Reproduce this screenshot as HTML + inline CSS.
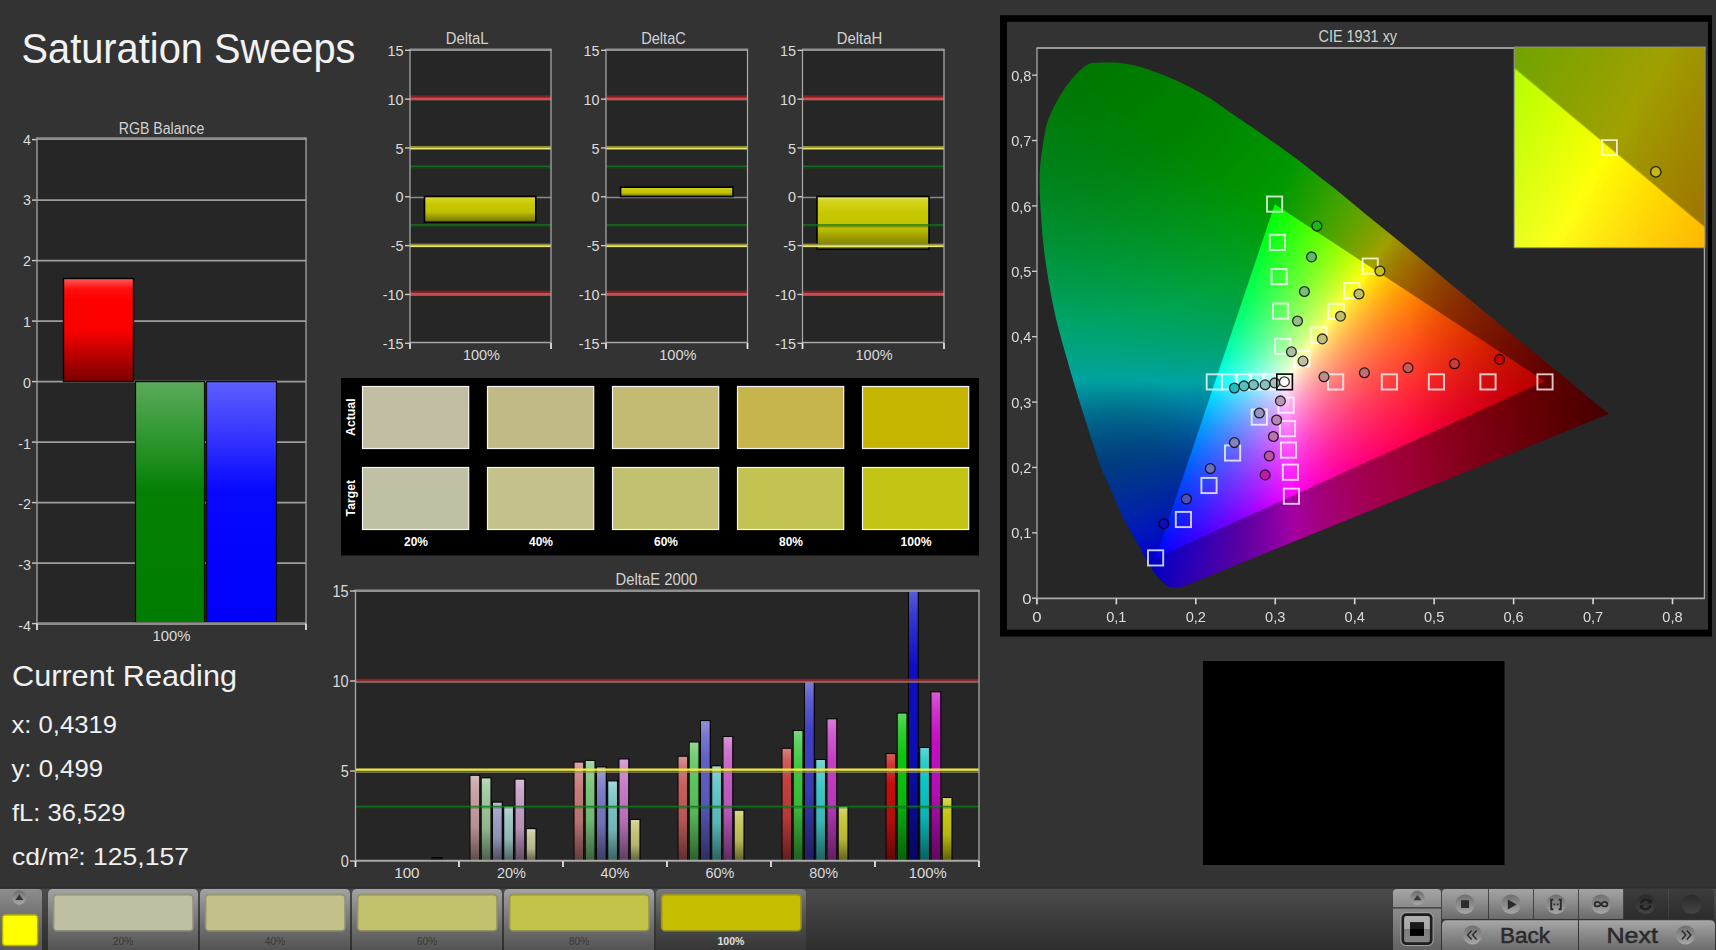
<!DOCTYPE html>
<html><head><meta charset="utf-8"><title>Saturation Sweeps</title>
<style>html,body{margin:0;padding:0;background:#333;overflow:hidden}svg{display:block}text{font-family:"Liberation Sans",sans-serif}</style>
</head><body>
<svg width="1716" height="950" viewBox="0 0 1716 950">
<defs>
<linearGradient id="g1" x1="0" y1="0" x2="0" y2="1"><stop offset="0" stop-color="#ff5a5a"/><stop offset="0.1" stop-color="#ff1010"/><stop offset="0.2" stop-color="#ff0000"/><stop offset="0.5" stop-color="#fb0000"/><stop offset="1" stop-color="#7a0000"/></linearGradient>
<linearGradient id="g2" x1="0" y1="0" x2="0" y2="1"><stop offset="0" stop-color="#5aaa5a"/><stop offset="0.2" stop-color="#359a35"/><stop offset="0.45" stop-color="#058005"/><stop offset="1" stop-color="#007c00"/></linearGradient>
<linearGradient id="g3" x1="0" y1="0" x2="0" y2="1"><stop offset="0" stop-color="#5e5eff"/><stop offset="0.2" stop-color="#3a3aff"/><stop offset="0.45" stop-color="#0808ff"/><stop offset="1" stop-color="#0000fb"/></linearGradient>
<linearGradient id="g4" x1="0" y1="0" x2="0" y2="1"><stop offset="0" stop-color="#e6e680"/><stop offset="0.08" stop-color="#d4d420"/><stop offset="0.3" stop-color="#c8c800"/><stop offset="0.6" stop-color="#c0c000"/><stop offset="1" stop-color="#6e6e00"/></linearGradient>
<linearGradient id="g5" x1="0" y1="0" x2="0" y2="1"><stop offset="0" stop-color="#e6e680"/><stop offset="0.08" stop-color="#d4d420"/><stop offset="0.3" stop-color="#c8c800"/><stop offset="0.6" stop-color="#c0c000"/><stop offset="1" stop-color="#6e6e00"/></linearGradient>
<linearGradient id="g6" x1="0" y1="0" x2="0" y2="1"><stop offset="0" stop-color="#e6e680"/><stop offset="0.08" stop-color="#d4d420"/><stop offset="0.3" stop-color="#c8c800"/><stop offset="0.6" stop-color="#c0c000"/><stop offset="1" stop-color="#6e6e00"/></linearGradient>
<linearGradient id="g7" x1="0" y1="0" x2="0" y2="1"><stop offset="0" stop-color="#d8bcbc"/><stop offset="0.1" stop-color="#ceacac"/><stop offset="0.28" stop-color="#c59d9d"/><stop offset="0.6" stop-color="#b59090"/><stop offset="1" stop-color="#5f4b4b"/></linearGradient>
<linearGradient id="g8" x1="0" y1="0" x2="0" y2="1"><stop offset="0" stop-color="#bcd8bc"/><stop offset="0.1" stop-color="#acceac"/><stop offset="0.28" stop-color="#9dc59d"/><stop offset="0.6" stop-color="#90b590"/><stop offset="1" stop-color="#4b5f4b"/></linearGradient>
<linearGradient id="g9" x1="0" y1="0" x2="0" y2="1"><stop offset="0" stop-color="#bcbcd8"/><stop offset="0.1" stop-color="#acacce"/><stop offset="0.28" stop-color="#9d9dc5"/><stop offset="0.6" stop-color="#9090b5"/><stop offset="1" stop-color="#4b4b5f"/></linearGradient>
<linearGradient id="g10" x1="0" y1="0" x2="0" y2="1"><stop offset="0" stop-color="#bcd8d8"/><stop offset="0.1" stop-color="#accece"/><stop offset="0.28" stop-color="#9dc5c5"/><stop offset="0.6" stop-color="#90b5b5"/><stop offset="1" stop-color="#4b5f5f"/></linearGradient>
<linearGradient id="g11" x1="0" y1="0" x2="0" y2="1"><stop offset="0" stop-color="#d8bcd8"/><stop offset="0.1" stop-color="#ceacce"/><stop offset="0.28" stop-color="#c59dc5"/><stop offset="0.6" stop-color="#b590b5"/><stop offset="1" stop-color="#5f4b5f"/></linearGradient>
<linearGradient id="g12" x1="0" y1="0" x2="0" y2="1"><stop offset="0" stop-color="#d8d8bc"/><stop offset="0.1" stop-color="#ceceac"/><stop offset="0.28" stop-color="#c5c59d"/><stop offset="0.6" stop-color="#b5b590"/><stop offset="1" stop-color="#5f5f4b"/></linearGradient>
<linearGradient id="g13" x1="0" y1="0" x2="0" y2="1"><stop offset="0" stop-color="#d8a5a5"/><stop offset="0.1" stop-color="#ce8f8f"/><stop offset="0.28" stop-color="#c57a7a"/><stop offset="0.6" stop-color="#b57070"/><stop offset="1" stop-color="#5f3b3b"/></linearGradient>
<linearGradient id="g14" x1="0" y1="0" x2="0" y2="1"><stop offset="0" stop-color="#a5d8a5"/><stop offset="0.1" stop-color="#8fce8f"/><stop offset="0.28" stop-color="#7ac57a"/><stop offset="0.6" stop-color="#70b570"/><stop offset="1" stop-color="#3b5f3b"/></linearGradient>
<linearGradient id="g15" x1="0" y1="0" x2="0" y2="1"><stop offset="0" stop-color="#a5a5d8"/><stop offset="0.1" stop-color="#8f8fce"/><stop offset="0.28" stop-color="#7a7ac5"/><stop offset="0.6" stop-color="#7070b5"/><stop offset="1" stop-color="#3b3b5f"/></linearGradient>
<linearGradient id="g16" x1="0" y1="0" x2="0" y2="1"><stop offset="0" stop-color="#a5d8d8"/><stop offset="0.1" stop-color="#8fcece"/><stop offset="0.28" stop-color="#7ac5c5"/><stop offset="0.6" stop-color="#70b5b5"/><stop offset="1" stop-color="#3b5f5f"/></linearGradient>
<linearGradient id="g17" x1="0" y1="0" x2="0" y2="1"><stop offset="0" stop-color="#d8a5d8"/><stop offset="0.1" stop-color="#ce8fce"/><stop offset="0.28" stop-color="#c57ac5"/><stop offset="0.6" stop-color="#b570b5"/><stop offset="1" stop-color="#5f3b5f"/></linearGradient>
<linearGradient id="g18" x1="0" y1="0" x2="0" y2="1"><stop offset="0" stop-color="#d8d8a5"/><stop offset="0.1" stop-color="#cece8f"/><stop offset="0.28" stop-color="#c5c57a"/><stop offset="0.6" stop-color="#b5b570"/><stop offset="1" stop-color="#5f5f3b"/></linearGradient>
<linearGradient id="g19" x1="0" y1="0" x2="0" y2="1"><stop offset="0" stop-color="#d89292"/><stop offset="0.1" stop-color="#ce7878"/><stop offset="0.28" stop-color="#c55f5f"/><stop offset="0.6" stop-color="#b55757"/><stop offset="1" stop-color="#5f2d2d"/></linearGradient>
<linearGradient id="g20" x1="0" y1="0" x2="0" y2="1"><stop offset="0" stop-color="#92d892"/><stop offset="0.1" stop-color="#78ce78"/><stop offset="0.28" stop-color="#5fc55f"/><stop offset="0.6" stop-color="#57b557"/><stop offset="1" stop-color="#2d5f2d"/></linearGradient>
<linearGradient id="g21" x1="0" y1="0" x2="0" y2="1"><stop offset="0" stop-color="#9292d8"/><stop offset="0.1" stop-color="#7878ce"/><stop offset="0.28" stop-color="#5f5fc5"/><stop offset="0.6" stop-color="#5757b5"/><stop offset="1" stop-color="#2d2d5f"/></linearGradient>
<linearGradient id="g22" x1="0" y1="0" x2="0" y2="1"><stop offset="0" stop-color="#92d8d8"/><stop offset="0.1" stop-color="#78cece"/><stop offset="0.28" stop-color="#5fc5c5"/><stop offset="0.6" stop-color="#57b5b5"/><stop offset="1" stop-color="#2d5f5f"/></linearGradient>
<linearGradient id="g23" x1="0" y1="0" x2="0" y2="1"><stop offset="0" stop-color="#d892d8"/><stop offset="0.1" stop-color="#ce78ce"/><stop offset="0.28" stop-color="#c55fc5"/><stop offset="0.6" stop-color="#b557b5"/><stop offset="1" stop-color="#5f2d5f"/></linearGradient>
<linearGradient id="g24" x1="0" y1="0" x2="0" y2="1"><stop offset="0" stop-color="#d8d892"/><stop offset="0.1" stop-color="#cece78"/><stop offset="0.28" stop-color="#c5c55f"/><stop offset="0.6" stop-color="#b5b557"/><stop offset="1" stop-color="#5f5f2d"/></linearGradient>
<linearGradient id="g25" x1="0" y1="0" x2="0" y2="1"><stop offset="0" stop-color="#d87d7d"/><stop offset="0.1" stop-color="#ce5e5e"/><stop offset="0.28" stop-color="#c53f3f"/><stop offset="0.6" stop-color="#b53a3a"/><stop offset="1" stop-color="#5f1e1e"/></linearGradient>
<linearGradient id="g26" x1="0" y1="0" x2="0" y2="1"><stop offset="0" stop-color="#7dd87d"/><stop offset="0.1" stop-color="#5ece5e"/><stop offset="0.28" stop-color="#3fc53f"/><stop offset="0.6" stop-color="#3ab53a"/><stop offset="1" stop-color="#1e5f1e"/></linearGradient>
<linearGradient id="g27" x1="0" y1="0" x2="0" y2="1"><stop offset="0" stop-color="#7d7dd8"/><stop offset="0.1" stop-color="#5e5ece"/><stop offset="0.28" stop-color="#3f3fc5"/><stop offset="0.6" stop-color="#3a3ab5"/><stop offset="1" stop-color="#1e1e5f"/></linearGradient>
<linearGradient id="g28" x1="0" y1="0" x2="0" y2="1"><stop offset="0" stop-color="#7dd8d8"/><stop offset="0.1" stop-color="#5ecece"/><stop offset="0.28" stop-color="#3fc5c5"/><stop offset="0.6" stop-color="#3ab5b5"/><stop offset="1" stop-color="#1e5f5f"/></linearGradient>
<linearGradient id="g29" x1="0" y1="0" x2="0" y2="1"><stop offset="0" stop-color="#d87dd8"/><stop offset="0.1" stop-color="#ce5ece"/><stop offset="0.28" stop-color="#c53fc5"/><stop offset="0.6" stop-color="#b53ab5"/><stop offset="1" stop-color="#5f1e5f"/></linearGradient>
<linearGradient id="g30" x1="0" y1="0" x2="0" y2="1"><stop offset="0" stop-color="#d8d87d"/><stop offset="0.1" stop-color="#cece5e"/><stop offset="0.28" stop-color="#c5c53f"/><stop offset="0.6" stop-color="#b5b53a"/><stop offset="1" stop-color="#5f5f1e"/></linearGradient>
<linearGradient id="g31" x1="0" y1="0" x2="0" y2="1"><stop offset="0" stop-color="#d85b5b"/><stop offset="0.1" stop-color="#ce3535"/><stop offset="0.28" stop-color="#c50e0e"/><stop offset="0.6" stop-color="#b50d0d"/><stop offset="1" stop-color="#5f0707"/></linearGradient>
<linearGradient id="g32" x1="0" y1="0" x2="0" y2="1"><stop offset="0" stop-color="#5bd85b"/><stop offset="0.1" stop-color="#35ce35"/><stop offset="0.28" stop-color="#0ec50e"/><stop offset="0.6" stop-color="#0db50d"/><stop offset="1" stop-color="#075f07"/></linearGradient>
<linearGradient id="g33" x1="0" y1="0" x2="0" y2="1"><stop offset="0" stop-color="#5b5bd8"/><stop offset="0.1" stop-color="#3535ce"/><stop offset="0.28" stop-color="#0e0ec5"/><stop offset="0.6" stop-color="#0d0db5"/><stop offset="1" stop-color="#07075f"/></linearGradient>
<linearGradient id="g34" x1="0" y1="0" x2="0" y2="1"><stop offset="0" stop-color="#5bd8d8"/><stop offset="0.1" stop-color="#35cece"/><stop offset="0.28" stop-color="#0ec5c5"/><stop offset="0.6" stop-color="#0db5b5"/><stop offset="1" stop-color="#075f5f"/></linearGradient>
<linearGradient id="g35" x1="0" y1="0" x2="0" y2="1"><stop offset="0" stop-color="#d85bd8"/><stop offset="0.1" stop-color="#ce35ce"/><stop offset="0.28" stop-color="#c50ec5"/><stop offset="0.6" stop-color="#b50db5"/><stop offset="1" stop-color="#5f075f"/></linearGradient>
<linearGradient id="g36" x1="0" y1="0" x2="0" y2="1"><stop offset="0" stop-color="#d8d85b"/><stop offset="0.1" stop-color="#cece35"/><stop offset="0.28" stop-color="#c5c50e"/><stop offset="0.6" stop-color="#b5b50d"/><stop offset="1" stop-color="#5f5f07"/></linearGradient>
<radialGradient id="ov1" gradientUnits="userSpaceOnUse" cx="0" cy="0" r="1" gradientTransform="translate(1135.85 538.36) scale(103.22 85.14)"><stop offset="0" stop-color="#000" stop-opacity="0"/><stop offset="0.3" stop-color="#000" stop-opacity="0.03"/><stop offset="1" stop-color="#000" stop-opacity="0.2"/></radialGradient>
<radialGradient id="ov2" gradientUnits="userSpaceOnUse" cx="0" cy="0" r="1" gradientTransform="translate(1052.48 34.09) scale(349.36 288.16)"><stop offset="0" stop-color="#000" stop-opacity="0.3"/><stop offset="0.5" stop-color="#000" stop-opacity="0.2"/><stop offset="1" stop-color="#000" stop-opacity="0"/></radialGradient>
<radialGradient id="ov5" gradientUnits="userSpaceOnUse" cx="0" cy="0" r="1" gradientTransform="translate(1112.03 466.32) scale(111.16 91.69)"><stop offset="0" stop-color="#000" stop-opacity="0.24"/><stop offset="0.5" stop-color="#000" stop-opacity="0.16"/><stop offset="1" stop-color="#000" stop-opacity="0"/></radialGradient>
<linearGradient id="ov3" gradientUnits="userSpaceOnUse" x1="1409.78" y1="400.83" x2="1616.22" y2="400.83"><stop offset="0" stop-color="#000" stop-opacity="0"/><stop offset="0.65" stop-color="#000" stop-opacity="0.3"/><stop offset="1" stop-color="#000" stop-opacity="0.45"/></linearGradient>
<linearGradient id="ov4" gradientUnits="userSpaceOnUse" x1="1354.2" y1="400.83" x2="1608.28" y2="400.83"><stop offset="0" stop-color="#000" stop-opacity="0"/><stop offset="0.6" stop-color="#000" stop-opacity="0.11"/><stop offset="1" stop-color="#000" stop-opacity="0.24"/></linearGradient>
<clipPath id="hs"><path d="M1094.1 62.8C1097.3 62.42 1102.63 62.4 1106.9 62.4C1111.17 62.4 1115.42 62.35 1119.7 62.8C1123.98 63.25 1128.32 64.13 1132.6 65.1C1136.88 66.07 1141.13 67.27 1145.4 68.6C1149.67 69.93 1153.93 71.5 1158.2 73.1C1162.47 74.7 1166.73 76.38 1171 78.2C1175.27 80.02 1179.52 81.9 1183.8 84C1188.08 86.1 1192.42 88.45 1196.7 90.8C1200.98 93.15 1205.62 95.7 1209.5 98.1C1213.38 100.5 1215.25 101.92 1220 105.2C1224.75 108.48 1231.68 113.45 1238 117.8C1244.32 122.15 1251.43 126.83 1257.9 131.3C1264.37 135.77 1270.48 140.1 1276.8 144.6C1283.12 149.1 1289.27 153.4 1295.8 158.3C1302.33 163.2 1309.22 168.72 1316 174C1322.78 179.28 1329.02 183.97 1336.5 190C1343.98 196.03 1352.15 203 1360.89 210.17C1369.64 217.34 1379.69 225.45 1388.95 233.03C1398.21 240.6 1407.41 248.19 1416.45 255.62C1425.48 263.05 1434.44 270.44 1443.16 277.63C1451.87 284.81 1460.47 291.9 1468.75 298.71C1477.04 305.52 1485.17 312.17 1492.85 318.49C1500.52 324.81 1507.96 330.99 1514.8 336.63C1521.64 342.28 1527.91 347.43 1533.9 352.35C1539.88 357.27 1545.57 361.97 1550.7 366.17C1555.82 370.37 1558.93 372.86 1564.65 377.56C1570.37 382.27 1579.45 389.81 1585.01 394.39C1590.57 398.98 1594.38 402.08 1598.01 405.07C1601.64 408.06 1605.04 410.85 1606.81 412.34C1608.57 413.83 1608.3 413.72 1608.6 414C1539.8 441.92 1264.6 553.58 1195.8 581.5C1193.83 582.27 1186.82 585.12 1184 586.1C1181.18 587.08 1180.87 587.18 1178.9 587.4C1176.93 587.62 1174.15 587.68 1172.2 587.4C1170.25 587.12 1168.88 586.68 1167.2 585.7C1165.52 584.72 1164.07 583.47 1162.1 581.5C1160.13 579.53 1157.78 577.13 1155.4 573.9C1153.02 570.67 1150.9 567.43 1147.8 562.1C1144.7 556.77 1140.73 548.92 1136.8 541.9C1132.87 534.88 1128.78 529.33 1124.2 520C1119.62 510.67 1113.33 495.07 1109.3 485.9C1105.27 476.73 1103.97 475.88 1100 465C1096.03 454.12 1089.75 433.93 1085.5 420.6C1081.25 407.27 1077.77 395.88 1074.5 385C1071.23 374.12 1068.85 365.8 1065.9 355.3C1062.95 344.8 1059.42 332.88 1056.8 322C1054.18 311.12 1052.33 302 1050.2 290C1048.07 278 1045.53 262.5 1044 250C1042.47 237.5 1041.72 225.33 1041 215C1040.28 204.67 1039.82 196.33 1039.7 188C1039.58 179.67 1039.35 174.67 1040.3 165C1041.25 155.33 1043.7 138.48 1045.4 130C1047.1 121.52 1048.58 118.88 1050.5 114.1C1052.42 109.32 1054.55 105.57 1056.9 101.3C1059.25 97.03 1061.82 92.57 1064.6 88.5C1067.38 84.43 1070.82 80.12 1073.6 76.9C1076.38 73.68 1078.95 71.23 1081.3 69.2C1083.65 67.17 1085.57 65.77 1087.7 64.7C1089.83 63.63 1090.9 63.18 1094.1 62.8Z"/></clipPath>
<clipPath id="sr"><path d="M1282.19 381.27L2502.48 -1306.03L7438.97 1670.2L1379.16 2344.35Z"/></clipPath>
<clipPath id="sg"><path d="M1286.25 383.83L2531.44 -1291.05L-1842.01 -4175.95L-1095.65 401.84Z"/></clipPath>
<clipPath id="sb"><path d="M1286.8 380.18L-1095.19 374.18L-3091.33 4176.09L1412.84 2342.12Z"/></clipPath>
<g id="ciefill" style="isolation:isolate"><rect x="-3000" y="-3000" width="9000" height="9000" fill="#000"/><g style="mix-blend-mode:screen"><path d="M1282.19 381.27L2502.48 -1306.03L7438.97 1670.2L1379.16 2344.35Z" fill="#ff0000"/><g clip-path="url(#sg)"><path d="M1155.7 558.01L1648.81 -114.44L1409.88 -199.39Z" fill="#fe0000"/><path d="M1155.7 558.01L1647.32 -115.18L1409.88 -199.39Z" fill="#fb0000"/><path d="M1155.7 558.01L1645.83 -115.92L1409.88 -199.39Z" fill="#f90000"/><path d="M1155.7 558.01L1644.35 -116.65L1409.88 -199.39Z" fill="#f70000"/><path d="M1155.7 558.01L1642.86 -117.39L1409.88 -199.39Z" fill="#f50000"/><path d="M1155.7 558.01L1641.37 -118.12L1409.88 -199.39Z" fill="#f20000"/><path d="M1155.7 558.01L1639.87 -118.84L1409.88 -199.39Z" fill="#f00000"/><path d="M1155.7 558.01L1638.38 -119.57L1409.88 -199.39Z" fill="#ee0000"/><path d="M1155.7 558.01L1636.88 -120.29L1409.88 -199.39Z" fill="#ec0000"/><path d="M1155.7 558.01L1635.38 -121.01L1409.88 -199.39Z" fill="#e90000"/><path d="M1155.7 558.01L1633.89 -121.73L1409.88 -199.39Z" fill="#e70000"/><path d="M1155.7 558.01L1632.38 -122.45L1409.88 -199.39Z" fill="#e50000"/><path d="M1155.7 558.01L1630.88 -123.16L1409.88 -199.39Z" fill="#e30000"/><path d="M1155.7 558.01L1629.38 -123.88L1409.88 -199.39Z" fill="#e10000"/><path d="M1155.7 558.01L1627.87 -124.59L1409.88 -199.39Z" fill="#de0000"/><path d="M1155.7 558.01L1626.37 -125.29L1409.88 -199.39Z" fill="#dc0000"/><path d="M1155.7 558.01L1624.86 -126L1409.88 -199.39Z" fill="#da0000"/><path d="M1155.7 558.01L1623.35 -126.7L1409.88 -199.39Z" fill="#d80000"/><path d="M1155.7 558.01L1621.84 -127.4L1409.88 -199.39Z" fill="#d60000"/><path d="M1155.7 558.01L1620.32 -128.1L1409.88 -199.39Z" fill="#d40000"/><path d="M1155.7 558.01L1618.81 -128.8L1409.88 -199.39Z" fill="#d20000"/><path d="M1155.7 558.01L1617.29 -129.49L1409.88 -199.39Z" fill="#d00000"/><path d="M1155.7 558.01L1615.77 -130.19L1409.88 -199.39Z" fill="#ce0000"/><path d="M1155.7 558.01L1614.25 -130.87L1409.88 -199.39Z" fill="#cb0000"/><path d="M1155.7 558.01L1612.73 -131.56L1409.88 -199.39Z" fill="#c90000"/><path d="M1155.7 558.01L1611.21 -132.25L1409.88 -199.39Z" fill="#c70000"/><path d="M1155.7 558.01L1609.69 -132.93L1409.88 -199.39Z" fill="#c50000"/><path d="M1155.7 558.01L1608.16 -133.61L1409.88 -199.39Z" fill="#c30000"/><path d="M1155.7 558.01L1606.63 -134.29L1409.88 -199.39Z" fill="#c10000"/><path d="M1155.7 558.01L1605.11 -134.96L1409.88 -199.39Z" fill="#bf0000"/><path d="M1155.7 558.01L1603.58 -135.64L1409.88 -199.39Z" fill="#bd0000"/><path d="M1155.7 558.01L1602.04 -136.31L1409.88 -199.39Z" fill="#bb0000"/><path d="M1155.7 558.01L1600.51 -136.98L1409.88 -199.39Z" fill="#b90000"/><path d="M1155.7 558.01L1598.98 -137.64L1409.88 -199.39Z" fill="#b70000"/><path d="M1155.7 558.01L1597.44 -138.31L1409.88 -199.39Z" fill="#b50000"/><path d="M1155.7 558.01L1595.9 -138.97L1409.88 -199.39Z" fill="#b40000"/><path d="M1155.7 558.01L1594.37 -139.63L1409.88 -199.39Z" fill="#b20000"/><path d="M1155.7 558.01L1592.82 -140.29L1409.88 -199.39Z" fill="#b00000"/><path d="M1155.7 558.01L1591.28 -140.94L1409.88 -199.39Z" fill="#ae0000"/><path d="M1155.7 558.01L1589.74 -141.6L1409.88 -199.39Z" fill="#ac0000"/><path d="M1155.7 558.01L1588.2 -142.25L1409.88 -199.39Z" fill="#aa0000"/><path d="M1155.7 558.01L1586.65 -142.89L1409.88 -199.39Z" fill="#a80000"/><path d="M1155.7 558.01L1585.1 -143.54L1409.88 -199.39Z" fill="#a60000"/><path d="M1155.7 558.01L1583.55 -144.18L1409.88 -199.39Z" fill="#a40000"/><path d="M1155.7 558.01L1582 -144.82L1409.88 -199.39Z" fill="#a30000"/><path d="M1155.7 558.01L1580.45 -145.46L1409.88 -199.39Z" fill="#a10000"/><path d="M1155.7 558.01L1578.9 -146.1L1409.88 -199.39Z" fill="#9f0000"/><path d="M1155.7 558.01L1577.34 -146.73L1409.88 -199.39Z" fill="#9d0000"/><path d="M1155.7 558.01L1575.79 -147.37L1409.88 -199.39Z" fill="#9b0000"/><path d="M1155.7 558.01L1574.23 -148L1409.88 -199.39Z" fill="#990000"/><path d="M1155.7 558.01L1572.67 -148.62L1409.88 -199.39Z" fill="#980000"/><path d="M1155.7 558.01L1571.11 -149.25L1409.88 -199.39Z" fill="#960000"/><path d="M1155.7 558.01L1569.55 -149.87L1409.88 -199.39Z" fill="#940000"/><path d="M1155.7 558.01L1567.99 -150.49L1409.88 -199.39Z" fill="#920000"/><path d="M1155.7 558.01L1566.42 -151.11L1409.88 -199.39Z" fill="#900000"/><path d="M1155.7 558.01L1564.86 -151.72L1409.88 -199.39Z" fill="#8f0000"/><path d="M1155.7 558.01L1563.29 -152.34L1409.88 -199.39Z" fill="#8d0000"/><path d="M1155.7 558.01L1561.72 -152.95L1409.88 -199.39Z" fill="#8b0000"/><path d="M1155.7 558.01L1560.15 -153.56L1409.88 -199.39Z" fill="#890000"/><path d="M1155.7 558.01L1558.58 -154.16L1409.88 -199.39Z" fill="#880000"/><path d="M1155.7 558.01L1557.01 -154.77L1409.88 -199.39Z" fill="#860000"/><path d="M1155.7 558.01L1555.44 -155.37L1409.88 -199.39Z" fill="#840000"/><path d="M1155.7 558.01L1553.86 -155.97L1409.88 -199.39Z" fill="#820000"/><path d="M1155.7 558.01L1552.29 -156.56L1409.88 -199.39Z" fill="#810000"/><path d="M1155.7 558.01L1550.71 -157.16L1409.88 -199.39Z" fill="#7f0000"/><path d="M1155.7 558.01L1549.13 -157.75L1409.88 -199.39Z" fill="#7d0000"/><path d="M1155.7 558.01L1547.55 -158.34L1409.88 -199.39Z" fill="#7c0000"/><path d="M1155.7 558.01L1545.97 -158.92L1409.88 -199.39Z" fill="#7a0000"/><path d="M1155.7 558.01L1544.39 -159.51L1409.88 -199.39Z" fill="#780000"/><path d="M1155.7 558.01L1542.8 -160.09L1409.88 -199.39Z" fill="#770000"/><path d="M1155.7 558.01L1541.22 -160.67L1409.88 -199.39Z" fill="#750000"/><path d="M1155.7 558.01L1539.63 -161.25L1409.88 -199.39Z" fill="#730000"/><path d="M1155.7 558.01L1538.04 -161.82L1409.88 -199.39Z" fill="#720000"/><path d="M1155.7 558.01L1536.45 -162.4L1409.88 -199.39Z" fill="#700000"/><path d="M1155.7 558.01L1534.86 -162.97L1409.88 -199.39Z" fill="#6e0000"/><path d="M1155.7 558.01L1533.27 -163.54L1409.88 -199.39Z" fill="#6d0000"/><path d="M1155.7 558.01L1531.68 -164.1L1409.88 -199.39Z" fill="#6b0000"/><path d="M1155.7 558.01L1530.08 -164.66L1409.88 -199.39Z" fill="#6a0000"/><path d="M1155.7 558.01L1528.49 -165.23L1409.88 -199.39Z" fill="#680000"/><path d="M1155.7 558.01L1526.89 -165.78L1409.88 -199.39Z" fill="#660000"/><path d="M1155.7 558.01L1525.29 -166.34L1409.88 -199.39Z" fill="#650000"/><path d="M1155.7 558.01L1523.7 -166.89L1409.88 -199.39Z" fill="#630000"/><path d="M1155.7 558.01L1522.09 -167.44L1409.88 -199.39Z" fill="#620000"/><path d="M1155.7 558.01L1520.49 -167.99L1409.88 -199.39Z" fill="#600000"/><path d="M1155.7 558.01L1518.89 -168.54L1409.88 -199.39Z" fill="#5e0000"/><path d="M1155.7 558.01L1517.29 -169.08L1409.88 -199.39Z" fill="#5d0000"/><path d="M1155.7 558.01L1515.68 -169.63L1409.88 -199.39Z" fill="#5b0000"/><path d="M1155.7 558.01L1514.08 -170.16L1409.88 -199.39Z" fill="#5a0000"/><path d="M1155.7 558.01L1512.47 -170.7L1409.88 -199.39Z" fill="#580000"/><path d="M1155.7 558.01L1510.86 -171.24L1409.88 -199.39Z" fill="#570000"/><path d="M1155.7 558.01L1509.25 -171.77L1409.88 -199.39Z" fill="#550000"/><path d="M1155.7 558.01L1507.64 -172.3L1409.88 -199.39Z" fill="#540000"/><path d="M1155.7 558.01L1506.03 -172.82L1409.88 -199.39Z" fill="#520000"/><path d="M1155.7 558.01L1504.41 -173.35L1409.88 -199.39Z" fill="#510000"/><path d="M1155.7 558.01L1502.8 -173.87L1409.88 -199.39Z" fill="#4f0000"/><path d="M1155.7 558.01L1501.18 -174.39L1409.88 -199.39Z" fill="#4e0000"/><path d="M1155.7 558.01L1499.57 -174.91L1409.88 -199.39Z" fill="#4c0000"/><path d="M1155.7 558.01L1497.95 -175.42L1409.88 -199.39Z" fill="#4b0000"/><path d="M1155.7 558.01L1496.33 -175.94L1409.88 -199.39Z" fill="#490000"/><path d="M1155.7 558.01L1494.71 -176.45L1409.88 -199.39Z" fill="#480000"/><path d="M1155.7 558.01L1493.09 -176.95L1409.88 -199.39Z" fill="#460000"/><path d="M1155.7 558.01L1491.47 -177.46L1409.88 -199.39Z" fill="#450000"/><path d="M1155.7 558.01L1489.84 -177.96L1409.88 -199.39Z" fill="#430000"/><path d="M1155.7 558.01L1488.22 -178.46L1409.88 -199.39Z" fill="#420000"/><path d="M1155.7 558.01L1486.59 -178.96L1409.88 -199.39Z" fill="#400000"/><path d="M1155.7 558.01L1484.96 -179.46L1409.88 -199.39Z" fill="#3f0000"/><path d="M1155.7 558.01L1483.34 -179.95L1409.88 -199.39Z" fill="#3d0000"/><path d="M1155.7 558.01L1481.71 -180.44L1409.88 -199.39Z" fill="#3c0000"/><path d="M1155.7 558.01L1480.08 -180.93L1409.88 -199.39Z" fill="#3a0000"/><path d="M1155.7 558.01L1478.45 -181.41L1409.88 -199.39Z" fill="#390000"/><path d="M1155.7 558.01L1476.81 -181.9L1409.88 -199.39Z" fill="#370000"/><path d="M1155.7 558.01L1475.18 -182.38L1409.88 -199.39Z" fill="#360000"/><path d="M1155.7 558.01L1473.55 -182.86L1409.88 -199.39Z" fill="#350000"/><path d="M1155.7 558.01L1471.91 -183.33L1409.88 -199.39Z" fill="#330000"/><path d="M1155.7 558.01L1470.27 -183.81L1409.88 -199.39Z" fill="#320000"/><path d="M1155.7 558.01L1468.64 -184.28L1409.88 -199.39Z" fill="#300000"/><path d="M1155.7 558.01L1467 -184.75L1409.88 -199.39Z" fill="#2f0000"/><path d="M1155.7 558.01L1465.36 -185.21L1409.88 -199.39Z" fill="#2d0000"/><path d="M1155.7 558.01L1463.72 -185.68L1409.88 -199.39Z" fill="#2c0000"/><path d="M1155.7 558.01L1462.08 -186.14L1409.88 -199.39Z" fill="#2b0000"/><path d="M1155.7 558.01L1460.43 -186.6L1409.88 -199.39Z" fill="#290000"/><path d="M1155.7 558.01L1458.79 -187.05L1409.88 -199.39Z" fill="#280000"/><path d="M1155.7 558.01L1457.15 -187.51L1409.88 -199.39Z" fill="#260000"/><path d="M1155.7 558.01L1455.5 -187.96L1409.88 -199.39Z" fill="#250000"/><path d="M1155.7 558.01L1453.85 -188.41L1409.88 -199.39Z" fill="#240000"/><path d="M1155.7 558.01L1452.21 -188.85L1409.88 -199.39Z" fill="#220000"/><path d="M1155.7 558.01L1450.56 -189.3L1409.88 -199.39Z" fill="#210000"/><path d="M1155.7 558.01L1448.91 -189.74L1409.88 -199.39Z" fill="#1f0000"/><path d="M1155.7 558.01L1447.26 -190.18L1409.88 -199.39Z" fill="#1e0000"/><path d="M1155.7 558.01L1445.61 -190.61L1409.88 -199.39Z" fill="#1d0000"/><path d="M1155.7 558.01L1443.95 -191.05L1409.88 -199.39Z" fill="#1b0000"/><path d="M1155.7 558.01L1442.3 -191.48L1409.88 -199.39Z" fill="#1a0000"/><path d="M1155.7 558.01L1440.65 -191.91L1409.88 -199.39Z" fill="#190000"/><path d="M1155.7 558.01L1438.99 -192.33L1409.88 -199.39Z" fill="#170000"/><path d="M1155.7 558.01L1437.33 -192.76L1409.88 -199.39Z" fill="#160000"/><path d="M1155.7 558.01L1435.68 -193.18L1409.88 -199.39Z" fill="#140000"/><path d="M1155.7 558.01L1434.02 -193.6L1409.88 -199.39Z" fill="#130000"/><path d="M1155.7 558.01L1432.36 -194.02L1409.88 -199.39Z" fill="#120000"/><path d="M1155.7 558.01L1430.7 -194.43L1409.88 -199.39Z" fill="#100000"/><path d="M1155.7 558.01L1429.04 -194.84L1409.88 -199.39Z" fill="#0f0000"/><path d="M1155.7 558.01L1427.38 -195.25L1409.88 -199.39Z" fill="#0e0000"/><path d="M1155.7 558.01L1425.71 -195.66L1409.88 -199.39Z" fill="#0c0000"/><path d="M1155.7 558.01L1424.05 -196.06L1409.88 -199.39Z" fill="#0b0000"/><path d="M1155.7 558.01L1422.39 -196.46L1409.88 -199.39Z" fill="#090000"/><path d="M1155.7 558.01L1420.72 -196.86L1409.88 -199.39Z" fill="#080000"/><path d="M1155.7 558.01L1419.06 -197.26L1409.88 -199.39Z" fill="#070000"/><path d="M1155.7 558.01L1417.39 -197.65L1409.88 -199.39Z" fill="#050000"/><path d="M1155.7 558.01L1415.72 -198.04L1409.88 -199.39Z" fill="#040000"/><path d="M1155.7 558.01L1414.05 -198.43L1409.88 -199.39Z" fill="#020000"/><path d="M1155.7 558.01L1412.38 -198.82L1409.88 -199.39Z" fill="#010000"/></g><g clip-path="url(#sb)"><path d="M1274.8 204.36L1319.4 989.38L1018.82 961.35Z" fill="#fe0000"/><path d="M1274.8 204.36L1317.39 989.45L1018.82 961.35Z" fill="#fc0000"/><path d="M1274.8 204.36L1315.37 989.53L1018.82 961.35Z" fill="#fa0000"/><path d="M1274.8 204.36L1313.35 989.6L1018.82 961.35Z" fill="#f80000"/><path d="M1274.8 204.36L1311.34 989.66L1018.82 961.35Z" fill="#f60000"/><path d="M1274.8 204.36L1309.32 989.72L1018.82 961.35Z" fill="#f40000"/><path d="M1274.8 204.36L1307.3 989.78L1018.82 961.35Z" fill="#f20000"/><path d="M1274.8 204.36L1305.28 989.84L1018.82 961.35Z" fill="#f00000"/><path d="M1274.8 204.36L1303.27 989.89L1018.82 961.35Z" fill="#ee0000"/><path d="M1274.8 204.36L1301.25 989.94L1018.82 961.35Z" fill="#ec0000"/><path d="M1274.8 204.36L1299.23 989.98L1018.82 961.35Z" fill="#ea0000"/><path d="M1274.8 204.36L1297.21 990.02L1018.82 961.35Z" fill="#e80000"/><path d="M1274.8 204.36L1295.2 990.06L1018.82 961.35Z" fill="#e60000"/><path d="M1274.8 204.36L1293.18 990.09L1018.82 961.35Z" fill="#e40000"/><path d="M1274.8 204.36L1291.16 990.12L1018.82 961.35Z" fill="#e20000"/><path d="M1274.8 204.36L1289.14 990.15L1018.82 961.35Z" fill="#e10000"/><path d="M1274.8 204.36L1287.12 990.17L1018.82 961.35Z" fill="#df0000"/><path d="M1274.8 204.36L1285.1 990.19L1018.82 961.35Z" fill="#dd0000"/><path d="M1274.8 204.36L1283.09 990.21L1018.82 961.35Z" fill="#db0000"/><path d="M1274.8 204.36L1281.07 990.22L1018.82 961.35Z" fill="#d90000"/><path d="M1274.8 204.36L1279.05 990.23L1018.82 961.35Z" fill="#d70000"/><path d="M1274.8 204.36L1277.03 990.24L1018.82 961.35Z" fill="#d50000"/><path d="M1274.8 204.36L1275.01 990.24L1018.82 961.35Z" fill="#d30000"/><path d="M1274.8 204.36L1272.99 990.24L1018.82 961.35Z" fill="#d10000"/><path d="M1274.8 204.36L1270.97 990.23L1018.82 961.35Z" fill="#d00000"/><path d="M1274.8 204.36L1268.96 990.23L1018.82 961.35Z" fill="#ce0000"/><path d="M1274.8 204.36L1266.94 990.21L1018.82 961.35Z" fill="#cc0000"/><path d="M1274.8 204.36L1264.92 990.2L1018.82 961.35Z" fill="#ca0000"/><path d="M1274.8 204.36L1262.9 990.18L1018.82 961.35Z" fill="#c80000"/><path d="M1274.8 204.36L1260.88 990.16L1018.82 961.35Z" fill="#c60000"/><path d="M1274.8 204.36L1258.86 990.13L1018.82 961.35Z" fill="#c50000"/><path d="M1274.8 204.36L1256.85 990.1L1018.82 961.35Z" fill="#c30000"/><path d="M1274.8 204.36L1254.83 990.07L1018.82 961.35Z" fill="#c10000"/><path d="M1274.8 204.36L1252.81 990.03L1018.82 961.35Z" fill="#bf0000"/><path d="M1274.8 204.36L1250.79 989.99L1018.82 961.35Z" fill="#bd0000"/><path d="M1274.8 204.36L1248.77 989.95L1018.82 961.35Z" fill="#bb0000"/><path d="M1274.8 204.36L1246.76 989.9L1018.82 961.35Z" fill="#ba0000"/><path d="M1274.8 204.36L1244.74 989.85L1018.82 961.35Z" fill="#b80000"/><path d="M1274.8 204.36L1242.72 989.79L1018.82 961.35Z" fill="#b60000"/><path d="M1274.8 204.36L1240.7 989.74L1018.82 961.35Z" fill="#b40000"/><path d="M1274.8 204.36L1238.69 989.68L1018.82 961.35Z" fill="#b20000"/><path d="M1274.8 204.36L1236.67 989.61L1018.82 961.35Z" fill="#b10000"/><path d="M1274.8 204.36L1234.65 989.54L1018.82 961.35Z" fill="#af0000"/><path d="M1274.8 204.36L1232.64 989.47L1018.82 961.35Z" fill="#ad0000"/><path d="M1274.8 204.36L1230.62 989.39L1018.82 961.35Z" fill="#ab0000"/><path d="M1274.8 204.36L1228.6 989.32L1018.82 961.35Z" fill="#aa0000"/><path d="M1274.8 204.36L1226.59 989.23L1018.82 961.35Z" fill="#a80000"/><path d="M1274.8 204.36L1224.57 989.15L1018.82 961.35Z" fill="#a60000"/><path d="M1274.8 204.36L1222.56 989.06L1018.82 961.35Z" fill="#a40000"/><path d="M1274.8 204.36L1220.54 988.96L1018.82 961.35Z" fill="#a30000"/><path d="M1274.8 204.36L1218.53 988.87L1018.82 961.35Z" fill="#a10000"/><path d="M1274.8 204.36L1216.51 988.77L1018.82 961.35Z" fill="#9f0000"/><path d="M1274.8 204.36L1214.5 988.66L1018.82 961.35Z" fill="#9d0000"/><path d="M1274.8 204.36L1212.48 988.56L1018.82 961.35Z" fill="#9c0000"/><path d="M1274.8 204.36L1210.47 988.45L1018.82 961.35Z" fill="#9a0000"/><path d="M1274.8 204.36L1208.45 988.33L1018.82 961.35Z" fill="#980000"/><path d="M1274.8 204.36L1206.44 988.21L1018.82 961.35Z" fill="#960000"/><path d="M1274.8 204.36L1204.43 988.09L1018.82 961.35Z" fill="#950000"/><path d="M1274.8 204.36L1202.41 987.97L1018.82 961.35Z" fill="#930000"/><path d="M1274.8 204.36L1200.4 987.84L1018.82 961.35Z" fill="#910000"/><path d="M1274.8 204.36L1198.39 987.71L1018.82 961.35Z" fill="#900000"/><path d="M1274.8 204.36L1196.38 987.57L1018.82 961.35Z" fill="#8e0000"/><path d="M1274.8 204.36L1194.37 987.43L1018.82 961.35Z" fill="#8c0000"/><path d="M1274.8 204.36L1192.36 987.29L1018.82 961.35Z" fill="#8b0000"/><path d="M1274.8 204.36L1190.34 987.15L1018.82 961.35Z" fill="#890000"/><path d="M1274.8 204.36L1188.33 987L1018.82 961.35Z" fill="#870000"/><path d="M1274.8 204.36L1186.32 986.84L1018.82 961.35Z" fill="#860000"/><path d="M1274.8 204.36L1184.32 986.69L1018.82 961.35Z" fill="#840000"/><path d="M1274.8 204.36L1182.31 986.53L1018.82 961.35Z" fill="#820000"/><path d="M1274.8 204.36L1180.3 986.36L1018.82 961.35Z" fill="#800000"/><path d="M1274.8 204.36L1178.29 986.2L1018.82 961.35Z" fill="#7f0000"/><path d="M1274.8 204.36L1176.28 986.03L1018.82 961.35Z" fill="#7d0000"/><path d="M1274.8 204.36L1174.27 985.85L1018.82 961.35Z" fill="#7b0000"/><path d="M1274.8 204.36L1172.27 985.68L1018.82 961.35Z" fill="#7a0000"/><path d="M1274.8 204.36L1170.26 985.5L1018.82 961.35Z" fill="#780000"/><path d="M1274.8 204.36L1168.25 985.31L1018.82 961.35Z" fill="#770000"/><path d="M1274.8 204.36L1166.25 985.12L1018.82 961.35Z" fill="#750000"/><path d="M1274.8 204.36L1164.24 984.93L1018.82 961.35Z" fill="#730000"/><path d="M1274.8 204.36L1162.24 984.74L1018.82 961.35Z" fill="#720000"/><path d="M1274.8 204.36L1160.23 984.54L1018.82 961.35Z" fill="#700000"/><path d="M1274.8 204.36L1158.23 984.34L1018.82 961.35Z" fill="#6e0000"/><path d="M1274.8 204.36L1156.23 984.13L1018.82 961.35Z" fill="#6d0000"/><path d="M1274.8 204.36L1154.22 983.92L1018.82 961.35Z" fill="#6b0000"/><path d="M1274.8 204.36L1152.22 983.71L1018.82 961.35Z" fill="#690000"/><path d="M1274.8 204.36L1150.22 983.49L1018.82 961.35Z" fill="#680000"/><path d="M1274.8 204.36L1148.22 983.27L1018.82 961.35Z" fill="#660000"/><path d="M1274.8 204.36L1146.22 983.05L1018.82 961.35Z" fill="#650000"/><path d="M1274.8 204.36L1144.22 982.82L1018.82 961.35Z" fill="#630000"/><path d="M1274.8 204.36L1142.22 982.59L1018.82 961.35Z" fill="#610000"/><path d="M1274.8 204.36L1140.22 982.36L1018.82 961.35Z" fill="#600000"/><path d="M1274.8 204.36L1138.22 982.12L1018.82 961.35Z" fill="#5e0000"/><path d="M1274.8 204.36L1136.23 981.88L1018.82 961.35Z" fill="#5d0000"/><path d="M1274.8 204.36L1134.23 981.64L1018.82 961.35Z" fill="#5b0000"/><path d="M1274.8 204.36L1132.23 981.39L1018.82 961.35Z" fill="#590000"/><path d="M1274.8 204.36L1130.24 981.14L1018.82 961.35Z" fill="#580000"/><path d="M1274.8 204.36L1128.24 980.89L1018.82 961.35Z" fill="#560000"/><path d="M1274.8 204.36L1126.25 980.63L1018.82 961.35Z" fill="#550000"/><path d="M1274.8 204.36L1124.26 980.37L1018.82 961.35Z" fill="#530000"/><path d="M1274.8 204.36L1122.26 980.1L1018.82 961.35Z" fill="#510000"/><path d="M1274.8 204.36L1120.27 979.84L1018.82 961.35Z" fill="#500000"/><path d="M1274.8 204.36L1118.28 979.56L1018.82 961.35Z" fill="#4e0000"/><path d="M1274.8 204.36L1116.29 979.29L1018.82 961.35Z" fill="#4d0000"/><path d="M1274.8 204.36L1114.3 979.01L1018.82 961.35Z" fill="#4b0000"/><path d="M1274.8 204.36L1112.31 978.73L1018.82 961.35Z" fill="#490000"/><path d="M1274.8 204.36L1110.32 978.44L1018.82 961.35Z" fill="#480000"/><path d="M1274.8 204.36L1108.33 978.15L1018.82 961.35Z" fill="#460000"/><path d="M1274.8 204.36L1106.35 977.86L1018.82 961.35Z" fill="#450000"/><path d="M1274.8 204.36L1104.36 977.56L1018.82 961.35Z" fill="#430000"/><path d="M1274.8 204.36L1102.37 977.26L1018.82 961.35Z" fill="#420000"/><path d="M1274.8 204.36L1100.39 976.96L1018.82 961.35Z" fill="#400000"/><path d="M1274.8 204.36L1098.41 976.65L1018.82 961.35Z" fill="#3e0000"/><path d="M1274.8 204.36L1096.42 976.34L1018.82 961.35Z" fill="#3d0000"/><path d="M1274.8 204.36L1094.44 976.03L1018.82 961.35Z" fill="#3b0000"/><path d="M1274.8 204.36L1092.46 975.71L1018.82 961.35Z" fill="#3a0000"/><path d="M1274.8 204.36L1090.48 975.39L1018.82 961.35Z" fill="#380000"/><path d="M1274.8 204.36L1088.5 975.07L1018.82 961.35Z" fill="#370000"/><path d="M1274.8 204.36L1086.52 974.74L1018.82 961.35Z" fill="#350000"/><path d="M1274.8 204.36L1084.54 974.41L1018.82 961.35Z" fill="#340000"/><path d="M1274.8 204.36L1082.56 974.08L1018.82 961.35Z" fill="#320000"/><path d="M1274.8 204.36L1080.59 973.74L1018.82 961.35Z" fill="#300000"/><path d="M1274.8 204.36L1078.61 973.4L1018.82 961.35Z" fill="#2f0000"/><path d="M1274.8 204.36L1076.64 973.06L1018.82 961.35Z" fill="#2d0000"/><path d="M1274.8 204.36L1074.66 972.71L1018.82 961.35Z" fill="#2c0000"/><path d="M1274.8 204.36L1072.69 972.36L1018.82 961.35Z" fill="#2a0000"/><path d="M1274.8 204.36L1070.72 972L1018.82 961.35Z" fill="#290000"/><path d="M1274.8 204.36L1068.75 971.64L1018.82 961.35Z" fill="#270000"/><path d="M1274.8 204.36L1066.78 971.28L1018.82 961.35Z" fill="#260000"/><path d="M1274.8 204.36L1064.81 970.92L1018.82 961.35Z" fill="#240000"/><path d="M1274.8 204.36L1062.84 970.55L1018.82 961.35Z" fill="#220000"/><path d="M1274.8 204.36L1060.87 970.17L1018.82 961.35Z" fill="#210000"/><path d="M1274.8 204.36L1058.9 969.8L1018.82 961.35Z" fill="#1f0000"/><path d="M1274.8 204.36L1056.94 969.42L1018.82 961.35Z" fill="#1e0000"/><path d="M1274.8 204.36L1054.97 969.04L1018.82 961.35Z" fill="#1c0000"/><path d="M1274.8 204.36L1053.01 968.65L1018.82 961.35Z" fill="#1b0000"/><path d="M1274.8 204.36L1051.05 968.26L1018.82 961.35Z" fill="#190000"/><path d="M1274.8 204.36L1049.09 967.87L1018.82 961.35Z" fill="#180000"/><path d="M1274.8 204.36L1047.13 967.47L1018.82 961.35Z" fill="#160000"/><path d="M1274.8 204.36L1045.17 967.07L1018.82 961.35Z" fill="#140000"/><path d="M1274.8 204.36L1043.21 966.67L1018.82 961.35Z" fill="#130000"/><path d="M1274.8 204.36L1041.25 966.26L1018.82 961.35Z" fill="#110000"/><path d="M1274.8 204.36L1039.29 965.86L1018.82 961.35Z" fill="#100000"/><path d="M1274.8 204.36L1037.34 965.44L1018.82 961.35Z" fill="#0e0000"/><path d="M1274.8 204.36L1035.38 965.03L1018.82 961.35Z" fill="#0c0000"/><path d="M1274.8 204.36L1033.43 964.61L1018.82 961.35Z" fill="#0b0000"/><path d="M1274.8 204.36L1031.48 964.18L1018.82 961.35Z" fill="#090000"/><path d="M1274.8 204.36L1029.53 963.75L1018.82 961.35Z" fill="#080000"/><path d="M1274.8 204.36L1027.58 963.32L1018.82 961.35Z" fill="#060000"/><path d="M1274.8 204.36L1025.63 962.89L1018.82 961.35Z" fill="#040000"/><path d="M1274.8 204.36L1023.68 962.45L1018.82 961.35Z" fill="#030000"/><path d="M1274.8 204.36L1021.73 962.01L1018.82 961.35Z" fill="#010000"/></g></g><g style="mix-blend-mode:screen"><path d="M1286.25 383.83L2531.44 -1291.05L-1842.01 -4175.95L-1095.65 401.84Z" fill="#00ff00"/><g clip-path="url(#sr)"><path d="M1155.7 558.01L1648.81 -114.44L1991 179.94Z" fill="#00fd00"/><path d="M1155.7 558.01L1651.65 -113.02L1991 179.94Z" fill="#00f800"/><path d="M1155.7 558.01L1654.48 -111.59L1991 179.94Z" fill="#00f400"/><path d="M1155.7 558.01L1657.31 -110.15L1991 179.94Z" fill="#00f000"/><path d="M1155.7 558.01L1660.13 -108.7L1991 179.94Z" fill="#00ec00"/><path d="M1155.7 558.01L1662.95 -107.25L1991 179.94Z" fill="#00e800"/><path d="M1155.7 558.01L1665.76 -105.78L1991 179.94Z" fill="#00e400"/><path d="M1155.7 558.01L1668.56 -104.31L1991 179.94Z" fill="#00e000"/><path d="M1155.7 558.01L1671.36 -102.83L1991 179.94Z" fill="#00dc00"/><path d="M1155.7 558.01L1674.15 -101.35L1991 179.94Z" fill="#00d900"/><path d="M1155.7 558.01L1676.94 -99.85L1991 179.94Z" fill="#00d500"/><path d="M1155.7 558.01L1679.72 -98.35L1991 179.94Z" fill="#00d200"/><path d="M1155.7 558.01L1682.49 -96.83L1991 179.94Z" fill="#00ce00"/><path d="M1155.7 558.01L1685.25 -95.32L1991 179.94Z" fill="#00cb00"/><path d="M1155.7 558.01L1688.01 -93.79L1991 179.94Z" fill="#00c800"/><path d="M1155.7 558.01L1690.77 -92.25L1991 179.94Z" fill="#00c400"/><path d="M1155.7 558.01L1693.51 -90.71L1991 179.94Z" fill="#00c100"/><path d="M1155.7 558.01L1696.25 -89.16L1991 179.94Z" fill="#00be00"/><path d="M1155.7 558.01L1698.99 -87.6L1991 179.94Z" fill="#00bb00"/><path d="M1155.7 558.01L1701.71 -86.03L1991 179.94Z" fill="#00b800"/><path d="M1155.7 558.01L1704.43 -84.46L1991 179.94Z" fill="#00b500"/><path d="M1155.7 558.01L1707.15 -82.87L1991 179.94Z" fill="#00b200"/><path d="M1155.7 558.01L1709.85 -81.28L1991 179.94Z" fill="#00af00"/><path d="M1155.7 558.01L1712.55 -79.69L1991 179.94Z" fill="#00ad00"/><path d="M1155.7 558.01L1715.25 -78.08L1991 179.94Z" fill="#00aa00"/><path d="M1155.7 558.01L1717.93 -76.47L1991 179.94Z" fill="#00a700"/><path d="M1155.7 558.01L1720.61 -74.84L1991 179.94Z" fill="#00a500"/><path d="M1155.7 558.01L1723.29 -73.22L1991 179.94Z" fill="#00a200"/><path d="M1155.7 558.01L1725.95 -71.58L1991 179.94Z" fill="#009f00"/><path d="M1155.7 558.01L1728.61 -69.93L1991 179.94Z" fill="#009d00"/><path d="M1155.7 558.01L1731.26 -68.28L1991 179.94Z" fill="#009a00"/><path d="M1155.7 558.01L1733.91 -66.62L1991 179.94Z" fill="#009800"/><path d="M1155.7 558.01L1736.55 -64.96L1991 179.94Z" fill="#009600"/><path d="M1155.7 558.01L1739.18 -63.28L1991 179.94Z" fill="#009300"/><path d="M1155.7 558.01L1741.8 -61.6L1991 179.94Z" fill="#009100"/><path d="M1155.7 558.01L1744.42 -59.91L1991 179.94Z" fill="#008f00"/><path d="M1155.7 558.01L1747.03 -58.21L1991 179.94Z" fill="#008d00"/><path d="M1155.7 558.01L1749.63 -56.51L1991 179.94Z" fill="#008a00"/><path d="M1155.7 558.01L1752.23 -54.79L1991 179.94Z" fill="#008800"/><path d="M1155.7 558.01L1754.81 -53.07L1991 179.94Z" fill="#008600"/><path d="M1155.7 558.01L1757.39 -51.35L1991 179.94Z" fill="#008400"/><path d="M1155.7 558.01L1759.97 -49.61L1991 179.94Z" fill="#008200"/><path d="M1155.7 558.01L1762.53 -47.87L1991 179.94Z" fill="#008000"/><path d="M1155.7 558.01L1765.09 -46.12L1991 179.94Z" fill="#007e00"/><path d="M1155.7 558.01L1767.64 -44.36L1991 179.94Z" fill="#007c00"/><path d="M1155.7 558.01L1770.19 -42.6L1991 179.94Z" fill="#007a00"/><path d="M1155.7 558.01L1772.72 -40.83L1991 179.94Z" fill="#007800"/><path d="M1155.7 558.01L1775.25 -39.05L1991 179.94Z" fill="#007600"/><path d="M1155.7 558.01L1777.77 -37.26L1991 179.94Z" fill="#007400"/><path d="M1155.7 558.01L1780.29 -35.47L1991 179.94Z" fill="#007200"/><path d="M1155.7 558.01L1782.79 -33.67L1991 179.94Z" fill="#007100"/><path d="M1155.7 558.01L1785.29 -31.86L1991 179.94Z" fill="#006f00"/><path d="M1155.7 558.01L1787.78 -30.05L1991 179.94Z" fill="#006d00"/><path d="M1155.7 558.01L1790.26 -28.22L1991 179.94Z" fill="#006b00"/><path d="M1155.7 558.01L1792.74 -26.39L1991 179.94Z" fill="#006a00"/><path d="M1155.7 558.01L1795.21 -24.56L1991 179.94Z" fill="#006800"/><path d="M1155.7 558.01L1797.67 -22.72L1991 179.94Z" fill="#006600"/><path d="M1155.7 558.01L1800.12 -20.86L1991 179.94Z" fill="#006500"/><path d="M1155.7 558.01L1802.56 -19.01L1991 179.94Z" fill="#006300"/><path d="M1155.7 558.01L1805 -17.14L1991 179.94Z" fill="#006100"/><path d="M1155.7 558.01L1807.43 -15.27L1991 179.94Z" fill="#006000"/><path d="M1155.7 558.01L1809.85 -13.39L1991 179.94Z" fill="#005e00"/><path d="M1155.7 558.01L1812.26 -11.51L1991 179.94Z" fill="#005d00"/><path d="M1155.7 558.01L1814.66 -9.61L1991 179.94Z" fill="#005b00"/><path d="M1155.7 558.01L1817.06 -7.72L1991 179.94Z" fill="#005900"/><path d="M1155.7 558.01L1819.45 -5.81L1991 179.94Z" fill="#005800"/><path d="M1155.7 558.01L1821.83 -3.9L1991 179.94Z" fill="#005700"/><path d="M1155.7 558.01L1824.2 -1.98L1991 179.94Z" fill="#005500"/><path d="M1155.7 558.01L1826.56 -0.05L1991 179.94Z" fill="#005400"/><path d="M1155.7 558.01L1828.92 1.88L1991 179.94Z" fill="#005200"/><path d="M1155.7 558.01L1831.27 3.82L1991 179.94Z" fill="#005100"/><path d="M1155.7 558.01L1833.61 5.77L1991 179.94Z" fill="#004f00"/><path d="M1155.7 558.01L1835.94 7.72L1991 179.94Z" fill="#004e00"/><path d="M1155.7 558.01L1838.26 9.68L1991 179.94Z" fill="#004d00"/><path d="M1155.7 558.01L1840.58 11.65L1991 179.94Z" fill="#004b00"/><path d="M1155.7 558.01L1842.88 13.63L1991 179.94Z" fill="#004a00"/><path d="M1155.7 558.01L1845.18 15.61L1991 179.94Z" fill="#004900"/><path d="M1155.7 558.01L1847.47 17.59L1991 179.94Z" fill="#004700"/><path d="M1155.7 558.01L1849.75 19.59L1991 179.94Z" fill="#004600"/><path d="M1155.7 558.01L1852.02 21.59L1991 179.94Z" fill="#004500"/><path d="M1155.7 558.01L1854.29 23.59L1991 179.94Z" fill="#004300"/><path d="M1155.7 558.01L1856.54 25.61L1991 179.94Z" fill="#004200"/><path d="M1155.7 558.01L1858.79 27.63L1991 179.94Z" fill="#004100"/><path d="M1155.7 558.01L1861.03 29.65L1991 179.94Z" fill="#004000"/><path d="M1155.7 558.01L1863.26 31.68L1991 179.94Z" fill="#003e00"/><path d="M1155.7 558.01L1865.48 33.72L1991 179.94Z" fill="#003d00"/><path d="M1155.7 558.01L1867.69 35.77L1991 179.94Z" fill="#003c00"/><path d="M1155.7 558.01L1869.9 37.82L1991 179.94Z" fill="#003b00"/><path d="M1155.7 558.01L1872.09 39.88L1991 179.94Z" fill="#003a00"/><path d="M1155.7 558.01L1874.28 41.94L1991 179.94Z" fill="#003900"/><path d="M1155.7 558.01L1876.46 44.01L1991 179.94Z" fill="#003700"/><path d="M1155.7 558.01L1878.63 46.09L1991 179.94Z" fill="#003600"/><path d="M1155.7 558.01L1880.79 48.17L1991 179.94Z" fill="#003500"/><path d="M1155.7 558.01L1882.94 50.26L1991 179.94Z" fill="#003400"/><path d="M1155.7 558.01L1885.08 52.36L1991 179.94Z" fill="#003300"/><path d="M1155.7 558.01L1887.22 54.46L1991 179.94Z" fill="#003200"/><path d="M1155.7 558.01L1889.34 56.57L1991 179.94Z" fill="#003100"/><path d="M1155.7 558.01L1891.46 58.68L1991 179.94Z" fill="#003000"/><path d="M1155.7 558.01L1893.56 60.8L1991 179.94Z" fill="#002f00"/><path d="M1155.7 558.01L1895.66 62.92L1991 179.94Z" fill="#002d00"/><path d="M1155.7 558.01L1897.75 65.06L1991 179.94Z" fill="#002c00"/><path d="M1155.7 558.01L1899.83 67.19L1991 179.94Z" fill="#002b00"/><path d="M1155.7 558.01L1901.9 69.34L1991 179.94Z" fill="#002a00"/><path d="M1155.7 558.01L1903.96 71.49L1991 179.94Z" fill="#002900"/><path d="M1155.7 558.01L1906.02 73.64L1991 179.94Z" fill="#002800"/><path d="M1155.7 558.01L1908.06 75.8L1991 179.94Z" fill="#002700"/><path d="M1155.7 558.01L1910.1 77.97L1991 179.94Z" fill="#002600"/><path d="M1155.7 558.01L1912.12 80.15L1991 179.94Z" fill="#002500"/><path d="M1155.7 558.01L1914.14 82.32L1991 179.94Z" fill="#002400"/><path d="M1155.7 558.01L1916.14 84.51L1991 179.94Z" fill="#002300"/><path d="M1155.7 558.01L1918.14 86.7L1991 179.94Z" fill="#002200"/><path d="M1155.7 558.01L1920.13 88.9L1991 179.94Z" fill="#002100"/><path d="M1155.7 558.01L1922.11 91.1L1991 179.94Z" fill="#002000"/><path d="M1155.7 558.01L1924.08 93.31L1991 179.94Z" fill="#001f00"/><path d="M1155.7 558.01L1926.04 95.52L1991 179.94Z" fill="#001f00"/><path d="M1155.7 558.01L1927.99 97.74L1991 179.94Z" fill="#001e00"/><path d="M1155.7 558.01L1929.93 99.96L1991 179.94Z" fill="#001d00"/><path d="M1155.7 558.01L1931.87 102.19L1991 179.94Z" fill="#001c00"/><path d="M1155.7 558.01L1933.79 104.43L1991 179.94Z" fill="#001b00"/><path d="M1155.7 558.01L1935.7 106.67L1991 179.94Z" fill="#001a00"/><path d="M1155.7 558.01L1937.61 108.92L1991 179.94Z" fill="#001900"/><path d="M1155.7 558.01L1939.5 111.17L1991 179.94Z" fill="#001800"/><path d="M1155.7 558.01L1941.38 113.43L1991 179.94Z" fill="#001700"/><path d="M1155.7 558.01L1943.26 115.69L1991 179.94Z" fill="#001600"/><path d="M1155.7 558.01L1945.13 117.96L1991 179.94Z" fill="#001500"/><path d="M1155.7 558.01L1946.98 120.23L1991 179.94Z" fill="#001500"/><path d="M1155.7 558.01L1948.83 122.51L1991 179.94Z" fill="#001400"/><path d="M1155.7 558.01L1950.66 124.8L1991 179.94Z" fill="#001300"/><path d="M1155.7 558.01L1952.49 127.09L1991 179.94Z" fill="#001200"/><path d="M1155.7 558.01L1954.31 129.38L1991 179.94Z" fill="#001100"/><path d="M1155.7 558.01L1956.12 131.68L1991 179.94Z" fill="#001000"/><path d="M1155.7 558.01L1957.92 133.99L1991 179.94Z" fill="#000f00"/><path d="M1155.7 558.01L1959.7 136.3L1991 179.94Z" fill="#000f00"/><path d="M1155.7 558.01L1961.48 138.61L1991 179.94Z" fill="#000e00"/><path d="M1155.7 558.01L1963.25 140.93L1991 179.94Z" fill="#000d00"/><path d="M1155.7 558.01L1965.01 143.26L1991 179.94Z" fill="#000c00"/><path d="M1155.7 558.01L1966.76 145.59L1991 179.94Z" fill="#000b00"/><path d="M1155.7 558.01L1968.5 147.93L1991 179.94Z" fill="#000a00"/><path d="M1155.7 558.01L1970.23 150.27L1991 179.94Z" fill="#000a00"/><path d="M1155.7 558.01L1971.95 152.61L1991 179.94Z" fill="#000900"/><path d="M1155.7 558.01L1973.66 154.96L1991 179.94Z" fill="#000800"/><path d="M1155.7 558.01L1975.35 157.32L1991 179.94Z" fill="#000700"/><path d="M1155.7 558.01L1977.04 159.68L1991 179.94Z" fill="#000600"/><path d="M1155.7 558.01L1978.72 162.05L1991 179.94Z" fill="#000500"/><path d="M1155.7 558.01L1980.39 164.42L1991 179.94Z" fill="#000500"/><path d="M1155.7 558.01L1982.05 166.79L1991 179.94Z" fill="#000400"/><path d="M1155.7 558.01L1983.7 169.17L1991 179.94Z" fill="#000300"/><path d="M1155.7 558.01L1985.34 171.55L1991 179.94Z" fill="#000200"/><path d="M1155.7 558.01L1986.97 173.94L1991 179.94Z" fill="#000100"/><path d="M1155.7 558.01L1988.59 176.34L1991 179.94Z" fill="#000100"/></g><g clip-path="url(#sb)"><path d="M1544.76 381.18L591.96 383.58L711.03 761.6Z" fill="#00fe00"/><path d="M1544.76 381.18L591.98 386.21L711.03 761.6Z" fill="#00fb00"/><path d="M1544.76 381.18L592.01 388.83L711.03 761.6Z" fill="#00f900"/><path d="M1544.76 381.18L592.04 391.45L711.03 761.6Z" fill="#00f600"/><path d="M1544.76 381.18L592.09 394.07L711.03 761.6Z" fill="#00f400"/><path d="M1544.76 381.18L592.15 396.7L711.03 761.6Z" fill="#00f200"/><path d="M1544.76 381.18L592.21 399.32L711.03 761.6Z" fill="#00ef00"/><path d="M1544.76 381.18L592.29 401.94L711.03 761.6Z" fill="#00ed00"/><path d="M1544.76 381.18L592.38 404.56L711.03 761.6Z" fill="#00eb00"/><path d="M1544.76 381.18L592.48 407.18L711.03 761.6Z" fill="#00e800"/><path d="M1544.76 381.18L592.59 409.8L711.03 761.6Z" fill="#00e600"/><path d="M1544.76 381.18L592.71 412.42L711.03 761.6Z" fill="#00e400"/><path d="M1544.76 381.18L592.84 415.04L711.03 761.6Z" fill="#00e100"/><path d="M1544.76 381.18L592.99 417.66L711.03 761.6Z" fill="#00df00"/><path d="M1544.76 381.18L593.14 420.28L711.03 761.6Z" fill="#00dd00"/><path d="M1544.76 381.18L593.3 422.9L711.03 761.6Z" fill="#00db00"/><path d="M1544.76 381.18L593.48 425.52L711.03 761.6Z" fill="#00d800"/><path d="M1544.76 381.18L593.66 428.14L711.03 761.6Z" fill="#00d600"/><path d="M1544.76 381.18L593.86 430.76L711.03 761.6Z" fill="#00d400"/><path d="M1544.76 381.18L594.06 433.37L711.03 761.6Z" fill="#00d200"/><path d="M1544.76 381.18L594.28 435.99L711.03 761.6Z" fill="#00d000"/><path d="M1544.76 381.18L594.51 438.61L711.03 761.6Z" fill="#00ce00"/><path d="M1544.76 381.18L594.74 441.22L711.03 761.6Z" fill="#00cb00"/><path d="M1544.76 381.18L594.99 443.84L711.03 761.6Z" fill="#00c900"/><path d="M1544.76 381.18L595.25 446.45L711.03 761.6Z" fill="#00c700"/><path d="M1544.76 381.18L595.52 449.06L711.03 761.6Z" fill="#00c500"/><path d="M1544.76 381.18L595.8 451.68L711.03 761.6Z" fill="#00c300"/><path d="M1544.76 381.18L596.09 454.29L711.03 761.6Z" fill="#00c100"/><path d="M1544.76 381.18L596.39 456.9L711.03 761.6Z" fill="#00bf00"/><path d="M1544.76 381.18L596.7 459.51L711.03 761.6Z" fill="#00bd00"/><path d="M1544.76 381.18L597.03 462.12L711.03 761.6Z" fill="#00bb00"/><path d="M1544.76 381.18L597.36 464.73L711.03 761.6Z" fill="#00b900"/><path d="M1544.76 381.18L597.7 467.33L711.03 761.6Z" fill="#00b700"/><path d="M1544.76 381.18L598.06 469.94L711.03 761.6Z" fill="#00b500"/><path d="M1544.76 381.18L598.42 472.55L711.03 761.6Z" fill="#00b300"/><path d="M1544.76 381.18L598.8 475.15L711.03 761.6Z" fill="#00b100"/><path d="M1544.76 381.18L599.18 477.75L711.03 761.6Z" fill="#00af00"/><path d="M1544.76 381.18L599.58 480.35L711.03 761.6Z" fill="#00ad00"/><path d="M1544.76 381.18L599.98 482.96L711.03 761.6Z" fill="#00ab00"/><path d="M1544.76 381.18L600.4 485.56L711.03 761.6Z" fill="#00a900"/><path d="M1544.76 381.18L600.83 488.15L711.03 761.6Z" fill="#00a700"/><path d="M1544.76 381.18L601.27 490.75L711.03 761.6Z" fill="#00a600"/><path d="M1544.76 381.18L601.71 493.35L711.03 761.6Z" fill="#00a400"/><path d="M1544.76 381.18L602.17 495.94L711.03 761.6Z" fill="#00a200"/><path d="M1544.76 381.18L602.64 498.54L711.03 761.6Z" fill="#00a000"/><path d="M1544.76 381.18L603.12 501.13L711.03 761.6Z" fill="#009e00"/><path d="M1544.76 381.18L603.61 503.72L711.03 761.6Z" fill="#009c00"/><path d="M1544.76 381.18L604.11 506.31L711.03 761.6Z" fill="#009a00"/><path d="M1544.76 381.18L604.63 508.9L711.03 761.6Z" fill="#009900"/><path d="M1544.76 381.18L605.15 511.49L711.03 761.6Z" fill="#009700"/><path d="M1544.76 381.18L605.68 514.07L711.03 761.6Z" fill="#009500"/><path d="M1544.76 381.18L606.22 516.66L711.03 761.6Z" fill="#009300"/><path d="M1544.76 381.18L606.78 519.24L711.03 761.6Z" fill="#009100"/><path d="M1544.76 381.18L607.34 521.82L711.03 761.6Z" fill="#009000"/><path d="M1544.76 381.18L607.91 524.4L711.03 761.6Z" fill="#008e00"/><path d="M1544.76 381.18L608.5 526.98L711.03 761.6Z" fill="#008c00"/><path d="M1544.76 381.18L609.09 529.55L711.03 761.6Z" fill="#008a00"/><path d="M1544.76 381.18L609.7 532.13L711.03 761.6Z" fill="#008900"/><path d="M1544.76 381.18L610.32 534.7L711.03 761.6Z" fill="#008700"/><path d="M1544.76 381.18L610.94 537.27L711.03 761.6Z" fill="#008500"/><path d="M1544.76 381.18L611.58 539.84L711.03 761.6Z" fill="#008400"/><path d="M1544.76 381.18L612.23 542.41L711.03 761.6Z" fill="#008200"/><path d="M1544.76 381.18L612.88 544.98L711.03 761.6Z" fill="#008000"/><path d="M1544.76 381.18L613.55 547.54L711.03 761.6Z" fill="#007f00"/><path d="M1544.76 381.18L614.23 550.1L711.03 761.6Z" fill="#007d00"/><path d="M1544.76 381.18L614.92 552.66L711.03 761.6Z" fill="#007b00"/><path d="M1544.76 381.18L615.62 555.22L711.03 761.6Z" fill="#007a00"/><path d="M1544.76 381.18L616.33 557.78L711.03 761.6Z" fill="#007800"/><path d="M1544.76 381.18L617.05 560.33L711.03 761.6Z" fill="#007600"/><path d="M1544.76 381.18L617.78 562.88L711.03 761.6Z" fill="#007500"/><path d="M1544.76 381.18L618.52 565.43L711.03 761.6Z" fill="#007300"/><path d="M1544.76 381.18L619.27 567.98L711.03 761.6Z" fill="#007100"/><path d="M1544.76 381.18L620.03 570.53L711.03 761.6Z" fill="#007000"/><path d="M1544.76 381.18L620.8 573.07L711.03 761.6Z" fill="#006e00"/><path d="M1544.76 381.18L621.58 575.62L711.03 761.6Z" fill="#006d00"/><path d="M1544.76 381.18L622.37 578.16L711.03 761.6Z" fill="#006b00"/><path d="M1544.76 381.18L623.17 580.69L711.03 761.6Z" fill="#006900"/><path d="M1544.76 381.18L623.99 583.23L711.03 761.6Z" fill="#006800"/><path d="M1544.76 381.18L624.81 585.76L711.03 761.6Z" fill="#006600"/><path d="M1544.76 381.18L625.64 588.29L711.03 761.6Z" fill="#006500"/><path d="M1544.76 381.18L626.49 590.82L711.03 761.6Z" fill="#006300"/><path d="M1544.76 381.18L627.34 593.35L711.03 761.6Z" fill="#006200"/><path d="M1544.76 381.18L628.2 595.87L711.03 761.6Z" fill="#006000"/><path d="M1544.76 381.18L629.08 598.39L711.03 761.6Z" fill="#005e00"/><path d="M1544.76 381.18L629.96 600.91L711.03 761.6Z" fill="#005d00"/><path d="M1544.76 381.18L630.85 603.43L711.03 761.6Z" fill="#005b00"/><path d="M1544.76 381.18L631.76 605.94L711.03 761.6Z" fill="#005a00"/><path d="M1544.76 381.18L632.67 608.46L711.03 761.6Z" fill="#005800"/><path d="M1544.76 381.18L633.6 610.97L711.03 761.6Z" fill="#005700"/><path d="M1544.76 381.18L634.53 613.47L711.03 761.6Z" fill="#005500"/><path d="M1544.76 381.18L635.48 615.98L711.03 761.6Z" fill="#005400"/><path d="M1544.76 381.18L636.43 618.48L711.03 761.6Z" fill="#005200"/><path d="M1544.76 381.18L637.4 620.98L711.03 761.6Z" fill="#005100"/><path d="M1544.76 381.18L638.37 623.47L711.03 761.6Z" fill="#004f00"/><path d="M1544.76 381.18L639.36 625.97L711.03 761.6Z" fill="#004e00"/><path d="M1544.76 381.18L640.35 628.46L711.03 761.6Z" fill="#004c00"/><path d="M1544.76 381.18L641.36 630.94L711.03 761.6Z" fill="#004b00"/><path d="M1544.76 381.18L642.37 633.43L711.03 761.6Z" fill="#004900"/><path d="M1544.76 381.18L643.4 635.91L711.03 761.6Z" fill="#004800"/><path d="M1544.76 381.18L644.44 638.39L711.03 761.6Z" fill="#004600"/><path d="M1544.76 381.18L645.48 640.87L711.03 761.6Z" fill="#004500"/><path d="M1544.76 381.18L646.54 643.34L711.03 761.6Z" fill="#004400"/><path d="M1544.76 381.18L647.6 645.81L711.03 761.6Z" fill="#004200"/><path d="M1544.76 381.18L648.68 648.28L711.03 761.6Z" fill="#004100"/><path d="M1544.76 381.18L649.76 650.75L711.03 761.6Z" fill="#003f00"/><path d="M1544.76 381.18L650.86 653.21L711.03 761.6Z" fill="#003e00"/><path d="M1544.76 381.18L651.97 655.67L711.03 761.6Z" fill="#003c00"/><path d="M1544.76 381.18L653.08 658.12L711.03 761.6Z" fill="#003b00"/><path d="M1544.76 381.18L654.21 660.58L711.03 761.6Z" fill="#003a00"/><path d="M1544.76 381.18L655.34 663.03L711.03 761.6Z" fill="#003800"/><path d="M1544.76 381.18L656.49 665.47L711.03 761.6Z" fill="#003700"/><path d="M1544.76 381.18L657.64 667.92L711.03 761.6Z" fill="#003500"/><path d="M1544.76 381.18L658.81 670.36L711.03 761.6Z" fill="#003400"/><path d="M1544.76 381.18L659.98 672.79L711.03 761.6Z" fill="#003300"/><path d="M1544.76 381.18L661.17 675.23L711.03 761.6Z" fill="#003100"/><path d="M1544.76 381.18L662.36 677.66L711.03 761.6Z" fill="#003000"/><path d="M1544.76 381.18L663.57 680.08L711.03 761.6Z" fill="#002e00"/><path d="M1544.76 381.18L664.78 682.51L711.03 761.6Z" fill="#002d00"/><path d="M1544.76 381.18L666 684.93L711.03 761.6Z" fill="#002c00"/><path d="M1544.76 381.18L667.24 687.35L711.03 761.6Z" fill="#002a00"/><path d="M1544.76 381.18L668.48 689.76L711.03 761.6Z" fill="#002900"/><path d="M1544.76 381.18L669.73 692.17L711.03 761.6Z" fill="#002700"/><path d="M1544.76 381.18L671 694.58L711.03 761.6Z" fill="#002600"/><path d="M1544.76 381.18L672.27 696.98L711.03 761.6Z" fill="#002500"/><path d="M1544.76 381.18L673.55 699.38L711.03 761.6Z" fill="#002300"/><path d="M1544.76 381.18L674.85 701.78L711.03 761.6Z" fill="#002200"/><path d="M1544.76 381.18L676.15 704.17L711.03 761.6Z" fill="#002100"/><path d="M1544.76 381.18L677.46 706.56L711.03 761.6Z" fill="#001f00"/><path d="M1544.76 381.18L678.78 708.94L711.03 761.6Z" fill="#001e00"/><path d="M1544.76 381.18L680.11 711.32L711.03 761.6Z" fill="#001d00"/><path d="M1544.76 381.18L681.45 713.7L711.03 761.6Z" fill="#001b00"/><path d="M1544.76 381.18L682.8 716.08L711.03 761.6Z" fill="#001a00"/><path d="M1544.76 381.18L684.16 718.45L711.03 761.6Z" fill="#001800"/><path d="M1544.76 381.18L685.53 720.81L711.03 761.6Z" fill="#001700"/><path d="M1544.76 381.18L686.91 723.18L711.03 761.6Z" fill="#001600"/><path d="M1544.76 381.18L688.3 725.54L711.03 761.6Z" fill="#001400"/><path d="M1544.76 381.18L689.7 727.89L711.03 761.6Z" fill="#001300"/><path d="M1544.76 381.18L691.1 730.24L711.03 761.6Z" fill="#001200"/><path d="M1544.76 381.18L692.52 732.59L711.03 761.6Z" fill="#001000"/><path d="M1544.76 381.18L693.95 734.94L711.03 761.6Z" fill="#000f00"/><path d="M1544.76 381.18L695.38 737.28L711.03 761.6Z" fill="#000e00"/><path d="M1544.76 381.18L696.83 739.61L711.03 761.6Z" fill="#000c00"/><path d="M1544.76 381.18L698.28 741.94L711.03 761.6Z" fill="#000b00"/><path d="M1544.76 381.18L699.75 744.27L711.03 761.6Z" fill="#000900"/><path d="M1544.76 381.18L701.22 746.6L711.03 761.6Z" fill="#000800"/><path d="M1544.76 381.18L702.71 748.92L711.03 761.6Z" fill="#000700"/><path d="M1544.76 381.18L704.2 751.23L711.03 761.6Z" fill="#000500"/><path d="M1544.76 381.18L705.7 753.54L711.03 761.6Z" fill="#000400"/><path d="M1544.76 381.18L707.21 755.85L711.03 761.6Z" fill="#000200"/><path d="M1544.76 381.18L708.73 758.15L711.03 761.6Z" fill="#000100"/></g></g><g style="mix-blend-mode:screen"><path d="M1286.8 380.18L-1095.19 374.18L-3091.33 4176.09L1412.84 2342.12Z" fill="#0000ff"/><g clip-path="url(#sr)"><path d="M1274.8 204.36L1319.4 989.38L2022.63 691.33Z" fill="#0000fc"/><path d="M1274.8 204.36L1324.81 989.16L2022.63 691.33Z" fill="#0000f7"/><path d="M1274.8 204.36L1330.22 988.91L2022.63 691.33Z" fill="#0000f2"/><path d="M1274.8 204.36L1335.63 988.64L2022.63 691.33Z" fill="#0000ed"/><path d="M1274.8 204.36L1341.03 988.34L2022.63 691.33Z" fill="#0000e8"/><path d="M1274.8 204.36L1346.44 988.02L2022.63 691.33Z" fill="#0000e4"/><path d="M1274.8 204.36L1351.84 987.67L2022.63 691.33Z" fill="#0000df"/><path d="M1274.8 204.36L1357.24 987.29L2022.63 691.33Z" fill="#0000db"/><path d="M1274.8 204.36L1362.63 986.89L2022.63 691.33Z" fill="#0000d7"/><path d="M1274.8 204.36L1368.02 986.47L2022.63 691.33Z" fill="#0000d3"/><path d="M1274.8 204.36L1373.41 986.02L2022.63 691.33Z" fill="#0000cf"/><path d="M1274.8 204.36L1378.8 985.54L2022.63 691.33Z" fill="#0000cb"/><path d="M1274.8 204.36L1384.18 985.04L2022.63 691.33Z" fill="#0000c7"/><path d="M1274.8 204.36L1389.56 984.52L2022.63 691.33Z" fill="#0000c4"/><path d="M1274.8 204.36L1394.94 983.97L2022.63 691.33Z" fill="#0000c0"/><path d="M1274.8 204.36L1400.31 983.39L2022.63 691.33Z" fill="#0000bd"/><path d="M1274.8 204.36L1405.68 982.79L2022.63 691.33Z" fill="#0000b9"/><path d="M1274.8 204.36L1411.04 982.16L2022.63 691.33Z" fill="#0000b6"/><path d="M1274.8 204.36L1416.4 981.51L2022.63 691.33Z" fill="#0000b3"/><path d="M1274.8 204.36L1421.76 980.84L2022.63 691.33Z" fill="#0000af"/><path d="M1274.8 204.36L1427.11 980.13L2022.63 691.33Z" fill="#0000ac"/><path d="M1274.8 204.36L1432.45 979.41L2022.63 691.33Z" fill="#0000a9"/><path d="M1274.8 204.36L1437.79 978.66L2022.63 691.33Z" fill="#0000a6"/><path d="M1274.8 204.36L1443.12 977.88L2022.63 691.33Z" fill="#0000a4"/><path d="M1274.8 204.36L1448.45 977.08L2022.63 691.33Z" fill="#0000a1"/><path d="M1274.8 204.36L1453.78 976.25L2022.63 691.33Z" fill="#00009e"/><path d="M1274.8 204.36L1459.1 975.4L2022.63 691.33Z" fill="#00009b"/><path d="M1274.8 204.36L1464.41 974.52L2022.63 691.33Z" fill="#000099"/><path d="M1274.8 204.36L1469.71 973.62L2022.63 691.33Z" fill="#000096"/><path d="M1274.8 204.36L1475.01 972.69L2022.63 691.33Z" fill="#000094"/><path d="M1274.8 204.36L1480.31 971.74L2022.63 691.33Z" fill="#000091"/><path d="M1274.8 204.36L1485.59 970.77L2022.63 691.33Z" fill="#00008f"/><path d="M1274.8 204.36L1490.87 969.77L2022.63 691.33Z" fill="#00008c"/><path d="M1274.8 204.36L1496.14 968.74L2022.63 691.33Z" fill="#00008a"/><path d="M1274.8 204.36L1501.41 967.69L2022.63 691.33Z" fill="#000088"/><path d="M1274.8 204.36L1506.67 966.61L2022.63 691.33Z" fill="#000086"/><path d="M1274.8 204.36L1511.92 965.52L2022.63 691.33Z" fill="#000083"/><path d="M1274.8 204.36L1517.16 964.39L2022.63 691.33Z" fill="#000081"/><path d="M1274.8 204.36L1522.4 963.24L2022.63 691.33Z" fill="#00007f"/><path d="M1274.8 204.36L1527.62 962.07L2022.63 691.33Z" fill="#00007d"/><path d="M1274.8 204.36L1532.84 960.87L2022.63 691.33Z" fill="#00007b"/><path d="M1274.8 204.36L1538.05 959.65L2022.63 691.33Z" fill="#000079"/><path d="M1274.8 204.36L1543.25 958.4L2022.63 691.33Z" fill="#000077"/><path d="M1274.8 204.36L1548.45 957.13L2022.63 691.33Z" fill="#000075"/><path d="M1274.8 204.36L1553.63 955.84L2022.63 691.33Z" fill="#000073"/><path d="M1274.8 204.36L1558.81 954.52L2022.63 691.33Z" fill="#000071"/><path d="M1274.8 204.36L1563.97 953.17L2022.63 691.33Z" fill="#000070"/><path d="M1274.8 204.36L1569.13 951.8L2022.63 691.33Z" fill="#00006e"/><path d="M1274.8 204.36L1574.28 950.41L2022.63 691.33Z" fill="#00006c"/><path d="M1274.8 204.36L1579.41 948.99L2022.63 691.33Z" fill="#00006a"/><path d="M1274.8 204.36L1584.54 947.55L2022.63 691.33Z" fill="#000069"/><path d="M1274.8 204.36L1589.66 946.09L2022.63 691.33Z" fill="#000067"/><path d="M1274.8 204.36L1594.77 944.6L2022.63 691.33Z" fill="#000065"/><path d="M1274.8 204.36L1599.87 943.09L2022.63 691.33Z" fill="#000064"/><path d="M1274.8 204.36L1604.95 941.55L2022.63 691.33Z" fill="#000062"/><path d="M1274.8 204.36L1610.03 939.99L2022.63 691.33Z" fill="#000060"/><path d="M1274.8 204.36L1615.09 938.41L2022.63 691.33Z" fill="#00005f"/><path d="M1274.8 204.36L1620.15 936.8L2022.63 691.33Z" fill="#00005d"/><path d="M1274.8 204.36L1625.19 935.17L2022.63 691.33Z" fill="#00005c"/><path d="M1274.8 204.36L1630.22 933.51L2022.63 691.33Z" fill="#00005a"/><path d="M1274.8 204.36L1635.24 931.84L2022.63 691.33Z" fill="#000059"/><path d="M1274.8 204.36L1640.25 930.13L2022.63 691.33Z" fill="#000057"/><path d="M1274.8 204.36L1645.25 928.41L2022.63 691.33Z" fill="#000056"/><path d="M1274.8 204.36L1650.23 926.66L2022.63 691.33Z" fill="#000054"/><path d="M1274.8 204.36L1655.21 924.89L2022.63 691.33Z" fill="#000053"/><path d="M1274.8 204.36L1660.17 923.09L2022.63 691.33Z" fill="#000052"/><path d="M1274.8 204.36L1665.12 921.27L2022.63 691.33Z" fill="#000050"/><path d="M1274.8 204.36L1670.05 919.43L2022.63 691.33Z" fill="#00004f"/><path d="M1274.8 204.36L1674.97 917.57L2022.63 691.33Z" fill="#00004e"/><path d="M1274.8 204.36L1679.88 915.68L2022.63 691.33Z" fill="#00004c"/><path d="M1274.8 204.36L1684.78 913.77L2022.63 691.33Z" fill="#00004b"/><path d="M1274.8 204.36L1689.66 911.83L2022.63 691.33Z" fill="#00004a"/><path d="M1274.8 204.36L1694.53 909.88L2022.63 691.33Z" fill="#000048"/><path d="M1274.8 204.36L1699.39 907.9L2022.63 691.33Z" fill="#000047"/><path d="M1274.8 204.36L1704.23 905.89L2022.63 691.33Z" fill="#000046"/><path d="M1274.8 204.36L1709.06 903.87L2022.63 691.33Z" fill="#000045"/><path d="M1274.8 204.36L1713.88 901.82L2022.63 691.33Z" fill="#000043"/><path d="M1274.8 204.36L1718.68 899.75L2022.63 691.33Z" fill="#000042"/><path d="M1274.8 204.36L1723.46 897.66L2022.63 691.33Z" fill="#000041"/><path d="M1274.8 204.36L1728.23 895.54L2022.63 691.33Z" fill="#000040"/><path d="M1274.8 204.36L1732.99 893.41L2022.63 691.33Z" fill="#00003f"/><path d="M1274.8 204.36L1737.73 891.25L2022.63 691.33Z" fill="#00003e"/><path d="M1274.8 204.36L1742.46 889.06L2022.63 691.33Z" fill="#00003c"/><path d="M1274.8 204.36L1747.17 886.86L2022.63 691.33Z" fill="#00003b"/><path d="M1274.8 204.36L1751.87 884.63L2022.63 691.33Z" fill="#00003a"/><path d="M1274.8 204.36L1756.55 882.38L2022.63 691.33Z" fill="#000039"/><path d="M1274.8 204.36L1761.22 880.11L2022.63 691.33Z" fill="#000038"/><path d="M1274.8 204.36L1765.87 877.82L2022.63 691.33Z" fill="#000037"/><path d="M1274.8 204.36L1770.5 875.51L2022.63 691.33Z" fill="#000036"/><path d="M1274.8 204.36L1775.12 873.17L2022.63 691.33Z" fill="#000035"/><path d="M1274.8 204.36L1779.72 870.82L2022.63 691.33Z" fill="#000034"/><path d="M1274.8 204.36L1784.31 868.44L2022.63 691.33Z" fill="#000033"/><path d="M1274.8 204.36L1788.88 866.04L2022.63 691.33Z" fill="#000032"/><path d="M1274.8 204.36L1793.43 863.62L2022.63 691.33Z" fill="#000031"/><path d="M1274.8 204.36L1797.97 861.17L2022.63 691.33Z" fill="#000030"/><path d="M1274.8 204.36L1802.48 858.71L2022.63 691.33Z" fill="#00002f"/><path d="M1274.8 204.36L1806.99 856.22L2022.63 691.33Z" fill="#00002e"/><path d="M1274.8 204.36L1811.47 853.72L2022.63 691.33Z" fill="#00002d"/><path d="M1274.8 204.36L1815.94 851.19L2022.63 691.33Z" fill="#00002c"/><path d="M1274.8 204.36L1820.39 848.64L2022.63 691.33Z" fill="#00002b"/><path d="M1274.8 204.36L1824.82 846.07L2022.63 691.33Z" fill="#00002a"/><path d="M1274.8 204.36L1829.23 843.48L2022.63 691.33Z" fill="#000029"/><path d="M1274.8 204.36L1833.63 840.87L2022.63 691.33Z" fill="#000028"/><path d="M1274.8 204.36L1838.01 838.24L2022.63 691.33Z" fill="#000027"/><path d="M1274.8 204.36L1842.37 835.59L2022.63 691.33Z" fill="#000026"/><path d="M1274.8 204.36L1846.71 832.92L2022.63 691.33Z" fill="#000025"/><path d="M1274.8 204.36L1851.04 830.23L2022.63 691.33Z" fill="#000024"/><path d="M1274.8 204.36L1855.34 827.52L2022.63 691.33Z" fill="#000023"/><path d="M1274.8 204.36L1859.63 824.78L2022.63 691.33Z" fill="#000022"/><path d="M1274.8 204.36L1863.89 822.03L2022.63 691.33Z" fill="#000021"/><path d="M1274.8 204.36L1868.14 819.26L2022.63 691.33Z" fill="#000020"/><path d="M1274.8 204.36L1872.37 816.47L2022.63 691.33Z" fill="#000020"/><path d="M1274.8 204.36L1876.58 813.65L2022.63 691.33Z" fill="#00001f"/><path d="M1274.8 204.36L1880.77 810.82L2022.63 691.33Z" fill="#00001e"/><path d="M1274.8 204.36L1884.94 807.97L2022.63 691.33Z" fill="#00001d"/><path d="M1274.8 204.36L1889.09 805.1L2022.63 691.33Z" fill="#00001c"/><path d="M1274.8 204.36L1893.22 802.21L2022.63 691.33Z" fill="#00001b"/><path d="M1274.8 204.36L1897.33 799.3L2022.63 691.33Z" fill="#00001a"/><path d="M1274.8 204.36L1901.42 796.37L2022.63 691.33Z" fill="#000019"/><path d="M1274.8 204.36L1905.5 793.42L2022.63 691.33Z" fill="#000019"/><path d="M1274.8 204.36L1909.55 790.46L2022.63 691.33Z" fill="#000018"/><path d="M1274.8 204.36L1913.58 787.47L2022.63 691.33Z" fill="#000017"/><path d="M1274.8 204.36L1917.58 784.46L2022.63 691.33Z" fill="#000016"/><path d="M1274.8 204.36L1921.57 781.44L2022.63 691.33Z" fill="#000015"/><path d="M1274.8 204.36L1925.54 778.4L2022.63 691.33Z" fill="#000014"/><path d="M1274.8 204.36L1929.49 775.34L2022.63 691.33Z" fill="#000014"/><path d="M1274.8 204.36L1933.41 772.26L2022.63 691.33Z" fill="#000013"/><path d="M1274.8 204.36L1937.32 769.16L2022.63 691.33Z" fill="#000012"/><path d="M1274.8 204.36L1941.2 766.04L2022.63 691.33Z" fill="#000011"/><path d="M1274.8 204.36L1945.06 762.91L2022.63 691.33Z" fill="#000010"/><path d="M1274.8 204.36L1948.9 759.76L2022.63 691.33Z" fill="#000010"/><path d="M1274.8 204.36L1952.72 756.59L2022.63 691.33Z" fill="#00000f"/><path d="M1274.8 204.36L1956.51 753.4L2022.63 691.33Z" fill="#00000e"/><path d="M1274.8 204.36L1960.28 750.19L2022.63 691.33Z" fill="#00000d"/><path d="M1274.8 204.36L1964.04 746.97L2022.63 691.33Z" fill="#00000c"/><path d="M1274.8 204.36L1967.77 743.73L2022.63 691.33Z" fill="#00000c"/><path d="M1274.8 204.36L1971.47 740.47L2022.63 691.33Z" fill="#00000b"/><path d="M1274.8 204.36L1975.16 737.2L2022.63 691.33Z" fill="#00000a"/><path d="M1274.8 204.36L1978.82 733.9L2022.63 691.33Z" fill="#000009"/><path d="M1274.8 204.36L1982.46 730.59L2022.63 691.33Z" fill="#000008"/><path d="M1274.8 204.36L1986.07 727.27L2022.63 691.33Z" fill="#000008"/><path d="M1274.8 204.36L1989.67 723.92L2022.63 691.33Z" fill="#000007"/><path d="M1274.8 204.36L1993.24 720.56L2022.63 691.33Z" fill="#000006"/><path d="M1274.8 204.36L1996.78 717.18L2022.63 691.33Z" fill="#000005"/><path d="M1274.8 204.36L2000.3 713.79L2022.63 691.33Z" fill="#000005"/><path d="M1274.8 204.36L2003.8 710.38L2022.63 691.33Z" fill="#000004"/><path d="M1274.8 204.36L2007.28 706.95L2022.63 691.33Z" fill="#000003"/><path d="M1274.8 204.36L2010.73 703.51L2022.63 691.33Z" fill="#000002"/><path d="M1274.8 204.36L2014.16 700.05L2022.63 691.33Z" fill="#000001"/><path d="M1274.8 204.36L2017.57 696.58L2022.63 691.33Z" fill="#000000"/></g><g clip-path="url(#sg)"><path d="M1544.76 381.18L591.96 383.58L799.95 -108.92Z" fill="#0000fd"/><path d="M1544.76 381.18L591.96 380.05L799.95 -108.92Z" fill="#0000fa"/><path d="M1544.76 381.18L591.98 376.52L799.95 -108.92Z" fill="#0000f7"/><path d="M1544.76 381.18L592.01 372.99L799.95 -108.92Z" fill="#0000f4"/><path d="M1544.76 381.18L592.07 369.46L799.95 -108.92Z" fill="#0000f0"/><path d="M1544.76 381.18L592.14 365.92L799.95 -108.92Z" fill="#0000ed"/><path d="M1544.76 381.18L592.23 362.39L799.95 -108.92Z" fill="#0000ea"/><path d="M1544.76 381.18L592.34 358.86L799.95 -108.92Z" fill="#0000e7"/><path d="M1544.76 381.18L592.48 355.33L799.95 -108.92Z" fill="#0000e4"/><path d="M1544.76 381.18L592.63 351.8L799.95 -108.92Z" fill="#0000e1"/><path d="M1544.76 381.18L592.8 348.27L799.95 -108.92Z" fill="#0000de"/><path d="M1544.76 381.18L592.98 344.74L799.95 -108.92Z" fill="#0000dc"/><path d="M1544.76 381.18L593.19 341.21L799.95 -108.92Z" fill="#0000d9"/><path d="M1544.76 381.18L593.42 337.69L799.95 -108.92Z" fill="#0000d6"/><path d="M1544.76 381.18L593.67 334.16L799.95 -108.92Z" fill="#0000d3"/><path d="M1544.76 381.18L593.93 330.64L799.95 -108.92Z" fill="#0000d1"/><path d="M1544.76 381.18L594.22 327.11L799.95 -108.92Z" fill="#0000ce"/><path d="M1544.76 381.18L594.52 323.59L799.95 -108.92Z" fill="#0000cb"/><path d="M1544.76 381.18L594.85 320.07L799.95 -108.92Z" fill="#0000c9"/><path d="M1544.76 381.18L595.19 316.54L799.95 -108.92Z" fill="#0000c6"/><path d="M1544.76 381.18L595.55 313.02L799.95 -108.92Z" fill="#0000c4"/><path d="M1544.76 381.18L595.93 309.51L799.95 -108.92Z" fill="#0000c1"/><path d="M1544.76 381.18L596.33 305.99L799.95 -108.92Z" fill="#0000bf"/><path d="M1544.76 381.18L596.75 302.47L799.95 -108.92Z" fill="#0000bc"/><path d="M1544.76 381.18L597.19 298.96L799.95 -108.92Z" fill="#0000ba"/><path d="M1544.76 381.18L597.65 295.45L799.95 -108.92Z" fill="#0000b7"/><path d="M1544.76 381.18L598.12 291.94L799.95 -108.92Z" fill="#0000b5"/><path d="M1544.76 381.18L598.62 288.43L799.95 -108.92Z" fill="#0000b3"/><path d="M1544.76 381.18L599.13 284.92L799.95 -108.92Z" fill="#0000b1"/><path d="M1544.76 381.18L599.67 281.42L799.95 -108.92Z" fill="#0000ae"/><path d="M1544.76 381.18L600.22 277.92L799.95 -108.92Z" fill="#0000ac"/><path d="M1544.76 381.18L600.79 274.42L799.95 -108.92Z" fill="#0000aa"/><path d="M1544.76 381.18L601.39 270.92L799.95 -108.92Z" fill="#0000a8"/><path d="M1544.76 381.18L602 267.42L799.95 -108.92Z" fill="#0000a5"/><path d="M1544.76 381.18L602.63 263.93L799.95 -108.92Z" fill="#0000a3"/><path d="M1544.76 381.18L603.27 260.44L799.95 -108.92Z" fill="#0000a1"/><path d="M1544.76 381.18L603.94 256.95L799.95 -108.92Z" fill="#00009f"/><path d="M1544.76 381.18L604.63 253.46L799.95 -108.92Z" fill="#00009d"/><path d="M1544.76 381.18L605.33 249.98L799.95 -108.92Z" fill="#00009b"/><path d="M1544.76 381.18L606.06 246.49L799.95 -108.92Z" fill="#000099"/><path d="M1544.76 381.18L606.8 243.02L799.95 -108.92Z" fill="#000097"/><path d="M1544.76 381.18L607.56 239.54L799.95 -108.92Z" fill="#000095"/><path d="M1544.76 381.18L608.34 236.07L799.95 -108.92Z" fill="#000093"/><path d="M1544.76 381.18L609.15 232.6L799.95 -108.92Z" fill="#000091"/><path d="M1544.76 381.18L609.96 229.13L799.95 -108.92Z" fill="#00008f"/><path d="M1544.76 381.18L610.8 225.67L799.95 -108.92Z" fill="#00008d"/><path d="M1544.76 381.18L611.66 222.2L799.95 -108.92Z" fill="#00008b"/><path d="M1544.76 381.18L612.53 218.75L799.95 -108.92Z" fill="#000089"/><path d="M1544.76 381.18L613.43 215.29L799.95 -108.92Z" fill="#000088"/><path d="M1544.76 381.18L614.34 211.84L799.95 -108.92Z" fill="#000086"/><path d="M1544.76 381.18L615.28 208.39L799.95 -108.92Z" fill="#000084"/><path d="M1544.76 381.18L616.23 204.95L799.95 -108.92Z" fill="#000082"/><path d="M1544.76 381.18L617.2 201.51L799.95 -108.92Z" fill="#000080"/><path d="M1544.76 381.18L618.18 198.07L799.95 -108.92Z" fill="#00007f"/><path d="M1544.76 381.18L619.19 194.64L799.95 -108.92Z" fill="#00007d"/><path d="M1544.76 381.18L620.22 191.21L799.95 -108.92Z" fill="#00007b"/><path d="M1544.76 381.18L621.26 187.78L799.95 -108.92Z" fill="#000079"/><path d="M1544.76 381.18L622.33 184.36L799.95 -108.92Z" fill="#000078"/><path d="M1544.76 381.18L623.41 180.95L799.95 -108.92Z" fill="#000076"/><path d="M1544.76 381.18L624.51 177.53L799.95 -108.92Z" fill="#000074"/><path d="M1544.76 381.18L625.63 174.12L799.95 -108.92Z" fill="#000073"/><path d="M1544.76 381.18L626.76 170.72L799.95 -108.92Z" fill="#000071"/><path d="M1544.76 381.18L627.92 167.32L799.95 -108.92Z" fill="#00006f"/><path d="M1544.76 381.18L629.09 163.92L799.95 -108.92Z" fill="#00006e"/><path d="M1544.76 381.18L630.29 160.53L799.95 -108.92Z" fill="#00006c"/><path d="M1544.76 381.18L631.5 157.14L799.95 -108.92Z" fill="#00006b"/><path d="M1544.76 381.18L632.73 153.76L799.95 -108.92Z" fill="#000069"/><path d="M1544.76 381.18L633.98 150.38L799.95 -108.92Z" fill="#000067"/><path d="M1544.76 381.18L635.25 147L799.95 -108.92Z" fill="#000066"/><path d="M1544.76 381.18L636.53 143.63L799.95 -108.92Z" fill="#000064"/><path d="M1544.76 381.18L637.83 140.27L799.95 -108.92Z" fill="#000063"/><path d="M1544.76 381.18L639.16 136.91L799.95 -108.92Z" fill="#000061"/><path d="M1544.76 381.18L640.5 133.55L799.95 -108.92Z" fill="#000060"/><path d="M1544.76 381.18L641.86 130.2L799.95 -108.92Z" fill="#00005e"/><path d="M1544.76 381.18L643.23 126.86L799.95 -108.92Z" fill="#00005d"/><path d="M1544.76 381.18L644.63 123.52L799.95 -108.92Z" fill="#00005b"/><path d="M1544.76 381.18L646.04 120.18L799.95 -108.92Z" fill="#00005a"/><path d="M1544.76 381.18L647.47 116.86L799.95 -108.92Z" fill="#000058"/><path d="M1544.76 381.18L648.92 113.53L799.95 -108.92Z" fill="#000057"/><path d="M1544.76 381.18L650.39 110.21L799.95 -108.92Z" fill="#000056"/><path d="M1544.76 381.18L651.87 106.9L799.95 -108.92Z" fill="#000054"/><path d="M1544.76 381.18L653.38 103.59L799.95 -108.92Z" fill="#000053"/><path d="M1544.76 381.18L654.9 100.29L799.95 -108.92Z" fill="#000051"/><path d="M1544.76 381.18L656.44 97L799.95 -108.92Z" fill="#000050"/><path d="M1544.76 381.18L658 93.71L799.95 -108.92Z" fill="#00004f"/><path d="M1544.76 381.18L659.57 90.42L799.95 -108.92Z" fill="#00004d"/><path d="M1544.76 381.18L661.17 87.14L799.95 -108.92Z" fill="#00004c"/><path d="M1544.76 381.18L662.78 83.87L799.95 -108.92Z" fill="#00004a"/><path d="M1544.76 381.18L664.41 80.6L799.95 -108.92Z" fill="#000049"/><path d="M1544.76 381.18L666.05 77.34L799.95 -108.92Z" fill="#000048"/><path d="M1544.76 381.18L667.72 74.09L799.95 -108.92Z" fill="#000046"/><path d="M1544.76 381.18L669.4 70.84L799.95 -108.92Z" fill="#000045"/><path d="M1544.76 381.18L671.1 67.6L799.95 -108.92Z" fill="#000044"/><path d="M1544.76 381.18L672.82 64.36L799.95 -108.92Z" fill="#000042"/><path d="M1544.76 381.18L674.55 61.13L799.95 -108.92Z" fill="#000041"/><path d="M1544.76 381.18L676.31 57.91L799.95 -108.92Z" fill="#000040"/><path d="M1544.76 381.18L678.08 54.69L799.95 -108.92Z" fill="#00003f"/><path d="M1544.76 381.18L679.86 51.48L799.95 -108.92Z" fill="#00003d"/><path d="M1544.76 381.18L681.67 48.28L799.95 -108.92Z" fill="#00003c"/><path d="M1544.76 381.18L683.49 45.08L799.95 -108.92Z" fill="#00003b"/><path d="M1544.76 381.18L685.33 41.89L799.95 -108.92Z" fill="#000039"/><path d="M1544.76 381.18L687.19 38.71L799.95 -108.92Z" fill="#000038"/><path d="M1544.76 381.18L689.06 35.54L799.95 -108.92Z" fill="#000037"/><path d="M1544.76 381.18L690.96 32.37L799.95 -108.92Z" fill="#000036"/><path d="M1544.76 381.18L692.87 29.21L799.95 -108.92Z" fill="#000034"/><path d="M1544.76 381.18L694.79 26.05L799.95 -108.92Z" fill="#000033"/><path d="M1544.76 381.18L696.74 22.9L799.95 -108.92Z" fill="#000032"/><path d="M1544.76 381.18L698.7 19.76L799.95 -108.92Z" fill="#000031"/><path d="M1544.76 381.18L700.68 16.63L799.95 -108.92Z" fill="#000030"/><path d="M1544.76 381.18L702.67 13.5L799.95 -108.92Z" fill="#00002e"/><path d="M1544.76 381.18L704.68 10.39L799.95 -108.92Z" fill="#00002d"/><path d="M1544.76 381.18L706.71 7.28L799.95 -108.92Z" fill="#00002c"/><path d="M1544.76 381.18L708.76 4.17L799.95 -108.92Z" fill="#00002b"/><path d="M1544.76 381.18L710.82 1.08L799.95 -108.92Z" fill="#00002a"/><path d="M1544.76 381.18L712.9 -2.01L799.95 -108.92Z" fill="#000028"/><path d="M1544.76 381.18L715 -5.09L799.95 -108.92Z" fill="#000027"/><path d="M1544.76 381.18L717.11 -8.16L799.95 -108.92Z" fill="#000026"/><path d="M1544.76 381.18L719.24 -11.23L799.95 -108.92Z" fill="#000025"/><path d="M1544.76 381.18L721.39 -14.28L799.95 -108.92Z" fill="#000024"/><path d="M1544.76 381.18L723.55 -17.33L799.95 -108.92Z" fill="#000023"/><path d="M1544.76 381.18L725.73 -20.37L799.95 -108.92Z" fill="#000021"/><path d="M1544.76 381.18L727.93 -23.4L799.95 -108.92Z" fill="#000020"/><path d="M1544.76 381.18L730.14 -26.43L799.95 -108.92Z" fill="#00001f"/><path d="M1544.76 381.18L732.37 -29.44L799.95 -108.92Z" fill="#00001e"/><path d="M1544.76 381.18L734.61 -32.45L799.95 -108.92Z" fill="#00001d"/><path d="M1544.76 381.18L736.88 -35.45L799.95 -108.92Z" fill="#00001c"/><path d="M1544.76 381.18L739.16 -38.44L799.95 -108.92Z" fill="#00001b"/><path d="M1544.76 381.18L741.45 -41.42L799.95 -108.92Z" fill="#000019"/><path d="M1544.76 381.18L743.76 -44.4L799.95 -108.92Z" fill="#000018"/><path d="M1544.76 381.18L746.09 -47.36L799.95 -108.92Z" fill="#000017"/><path d="M1544.76 381.18L748.43 -50.32L799.95 -108.92Z" fill="#000016"/><path d="M1544.76 381.18L750.79 -53.27L799.95 -108.92Z" fill="#000015"/><path d="M1544.76 381.18L753.17 -56.21L799.95 -108.92Z" fill="#000014"/><path d="M1544.76 381.18L755.56 -59.14L799.95 -108.92Z" fill="#000013"/><path d="M1544.76 381.18L757.97 -62.06L799.95 -108.92Z" fill="#000012"/><path d="M1544.76 381.18L760.39 -64.97L799.95 -108.92Z" fill="#000010"/><path d="M1544.76 381.18L762.83 -67.87L799.95 -108.92Z" fill="#00000f"/><path d="M1544.76 381.18L765.28 -70.77L799.95 -108.92Z" fill="#00000e"/><path d="M1544.76 381.18L767.75 -73.65L799.95 -108.92Z" fill="#00000d"/><path d="M1544.76 381.18L770.24 -76.53L799.95 -108.92Z" fill="#00000c"/><path d="M1544.76 381.18L772.74 -79.4L799.95 -108.92Z" fill="#00000b"/><path d="M1544.76 381.18L775.26 -82.25L799.95 -108.92Z" fill="#00000a"/><path d="M1544.76 381.18L777.79 -85.1L799.95 -108.92Z" fill="#000009"/><path d="M1544.76 381.18L780.34 -87.94L799.95 -108.92Z" fill="#000008"/><path d="M1544.76 381.18L782.91 -90.77L799.95 -108.92Z" fill="#000006"/><path d="M1544.76 381.18L785.49 -93.59L799.95 -108.92Z" fill="#000005"/><path d="M1544.76 381.18L788.08 -96.4L799.95 -108.92Z" fill="#000004"/><path d="M1544.76 381.18L790.69 -99.2L799.95 -108.92Z" fill="#000003"/><path d="M1544.76 381.18L793.32 -101.99L799.95 -108.92Z" fill="#000002"/><path d="M1544.76 381.18L795.96 -104.77L799.95 -108.92Z" fill="#000001"/></g></g><path d="M-3000 -3000H6000V6000H-3000ZM1544.76 381.18L1274.8 204.36L1155.7 558.01Z" fill-rule="evenodd" fill="#000" fill-opacity="0.2"/><path d="M-3000 -3000H6000V6000H-3000ZM1544.76 381.18L1274.8 204.36L1155.7 558.01Z" fill-rule="evenodd" fill="url(#ov1)"/><path d="M-3000 -3000H6000V6000H-3000ZM1544.76 381.18L1274.8 204.36L1155.7 558.01Z" fill-rule="evenodd" fill="url(#ov2)"/><path d="M-3000 -3000H6000V6000H-3000ZM1544.76 381.18L1274.8 204.36L1155.7 558.01Z" fill-rule="evenodd" fill="url(#ov5)"/><rect x="-3000" y="-3000" width="9000" height="9000" fill="url(#ov3)"/><path d="M-3000 -3000H6000V6000H-3000ZM1544.76 381.18L1274.8 204.36L1155.7 558.01Z" fill-rule="evenodd" fill="url(#ov4)"/></g>
<clipPath id="ins"><rect x="1514.2" y="47.1" width="190.8" height="200.6"/></clipPath>
<linearGradient id="g37" x1="0" y1="0" x2="0" y2="1"><stop offset="0" stop-color="#4c4c4c"/><stop offset="0.5" stop-color="#3c3c3c"/><stop offset="1" stop-color="#2e2e2e"/></linearGradient>
<linearGradient id="g38" x1="0" y1="0" x2="0" y2="1"><stop offset="0" stop-color="#8e8e8e"/><stop offset="0.4" stop-color="#747474"/><stop offset="1" stop-color="#585858"/></linearGradient>
<linearGradient id="g39" x1="0" y1="0" x2="0" y2="1"><stop offset="0" stop-color="#6e6e6e"/><stop offset="0.5" stop-color="#8a8a8a"/><stop offset="1" stop-color="#a8a8a8"/></linearGradient>
<linearGradient id="g40" x1="0" y1="0" x2="0" y2="1"><stop offset="0" stop-color="#a4a4a4"/><stop offset="0.12" stop-color="#989898"/><stop offset="0.6" stop-color="#707070"/><stop offset="1" stop-color="#545454"/></linearGradient>
<linearGradient id="g41" x1="0" y1="0" x2="0" y2="1"><stop offset="0" stop-color="#a4a4a4"/><stop offset="0.12" stop-color="#989898"/><stop offset="0.6" stop-color="#707070"/><stop offset="1" stop-color="#545454"/></linearGradient>
<linearGradient id="g42" x1="0" y1="0" x2="0" y2="1"><stop offset="0" stop-color="#a4a4a4"/><stop offset="0.12" stop-color="#989898"/><stop offset="0.6" stop-color="#707070"/><stop offset="1" stop-color="#545454"/></linearGradient>
<linearGradient id="g43" x1="0" y1="0" x2="0" y2="1"><stop offset="0" stop-color="#a4a4a4"/><stop offset="0.12" stop-color="#989898"/><stop offset="0.6" stop-color="#707070"/><stop offset="1" stop-color="#545454"/></linearGradient>
<linearGradient id="g44" x1="0" y1="0" x2="0" y2="1"><stop offset="0" stop-color="#7c7c7c"/><stop offset="0.15" stop-color="#6a6a6a"/><stop offset="0.6" stop-color="#4a4a4a"/><stop offset="1" stop-color="#363636"/></linearGradient>
<linearGradient id="g45" x1="0" y1="0" x2="0" y2="1"><stop offset="0" stop-color="#a6a6a6"/><stop offset="1" stop-color="#8a8a8a"/></linearGradient>
<linearGradient id="g46" x1="0" y1="0" x2="0" y2="1"><stop offset="0" stop-color="#8c8c8c"/><stop offset="1" stop-color="#626262"/></linearGradient>
<linearGradient id="g47" x1="0" y1="0" x2="0" y2="1"><stop offset="0" stop-color="#6e6e6e"/><stop offset="0.5" stop-color="#8a8a8a"/><stop offset="1" stop-color="#a8a8a8"/></linearGradient>
<linearGradient id="g48" x1="0" y1="0" x2="0" y2="1"><stop offset="0" stop-color="#b2b2b2"/><stop offset="0.5" stop-color="#a8a8a8"/><stop offset="0.5" stop-color="#7c7c7c"/><stop offset="1" stop-color="#868686"/></linearGradient>
<linearGradient id="g49" x1="0" y1="0" x2="0" y2="1"><stop offset="0" stop-color="#1c1c1c"/><stop offset="0.5" stop-color="#161616"/><stop offset="0.5" stop-color="#000"/><stop offset="1" stop-color="#000"/></linearGradient>
<linearGradient id="g50" x1="0" y1="0" x2="0" y2="1"><stop offset="0" stop-color="#a4a4a4"/><stop offset="0.5" stop-color="#8a8a8a"/><stop offset="1" stop-color="#6a6a6a"/></linearGradient>
<linearGradient id="g51" x1="0" y1="0" x2="0" y2="1"><stop offset="0" stop-color="#6e6e6e"/><stop offset="0.5" stop-color="#8a8a8a"/><stop offset="1" stop-color="#a8a8a8"/></linearGradient>
<linearGradient id="g52" x1="0" y1="0" x2="0" y2="1"><stop offset="0" stop-color="#a4a4a4"/><stop offset="0.5" stop-color="#8a8a8a"/><stop offset="1" stop-color="#6a6a6a"/></linearGradient>
<linearGradient id="g53" x1="0" y1="0" x2="0" y2="1"><stop offset="0" stop-color="#6e6e6e"/><stop offset="0.5" stop-color="#8a8a8a"/><stop offset="1" stop-color="#a8a8a8"/></linearGradient>
<linearGradient id="g54" x1="0" y1="0" x2="0" y2="1"><stop offset="0" stop-color="#a4a4a4"/><stop offset="0.5" stop-color="#8a8a8a"/><stop offset="1" stop-color="#6a6a6a"/></linearGradient>
<linearGradient id="g55" x1="0" y1="0" x2="0" y2="1"><stop offset="0" stop-color="#6e6e6e"/><stop offset="0.5" stop-color="#8a8a8a"/><stop offset="1" stop-color="#a8a8a8"/></linearGradient>
<linearGradient id="g56" x1="0" y1="0" x2="0" y2="1"><stop offset="0" stop-color="#a4a4a4"/><stop offset="0.5" stop-color="#8a8a8a"/><stop offset="1" stop-color="#6a6a6a"/></linearGradient>
<linearGradient id="g57" x1="0" y1="0" x2="0" y2="1"><stop offset="0" stop-color="#6e6e6e"/><stop offset="0.5" stop-color="#8a8a8a"/><stop offset="1" stop-color="#a8a8a8"/></linearGradient>
<linearGradient id="g58" x1="0" y1="0" x2="0" y2="1"><stop offset="0" stop-color="#3c3c3c"/><stop offset="1" stop-color="#2c2c2c"/></linearGradient>
<linearGradient id="g59" x1="0" y1="0" x2="0" y2="1"><stop offset="0" stop-color="#2a2a2a"/><stop offset="1" stop-color="#444444"/></linearGradient>
<linearGradient id="g60" x1="0" y1="0" x2="0" y2="1"><stop offset="0" stop-color="#3c3c3c"/><stop offset="1" stop-color="#2c2c2c"/></linearGradient>
<linearGradient id="g61" x1="0" y1="0" x2="0" y2="1"><stop offset="0" stop-color="#2a2a2a"/><stop offset="1" stop-color="#444444"/></linearGradient>
<linearGradient id="g62" x1="0" y1="0" x2="0" y2="1"><stop offset="0" stop-color="#a8a8a8"/><stop offset="0.4" stop-color="#8e8e8e"/><stop offset="1" stop-color="#6c6c6c"/></linearGradient>
<linearGradient id="g63" x1="0" y1="0" x2="0" y2="1"><stop offset="0" stop-color="#6e6e6e"/><stop offset="0.5" stop-color="#8a8a8a"/><stop offset="1" stop-color="#a8a8a8"/></linearGradient>
<linearGradient id="g64" x1="0" y1="0" x2="0" y2="1"><stop offset="0" stop-color="#6e6e6e"/><stop offset="0.5" stop-color="#8a8a8a"/><stop offset="1" stop-color="#a8a8a8"/></linearGradient>
</defs>
<rect x="0" y="0" width="1716" height="950" fill="#333333"/>
<text x="21.5" y="62.8" font-size="41.6" text-anchor="start" textLength="334" lengthAdjust="spacingAndGlyphs" fill="#f2f2f2">Saturation Sweeps</text>
<rect x="37" y="137.6" width="269" height="486" fill="#262626"/>
<text x="161.5" y="133.5" font-size="16" text-anchor="middle" textLength="85.5" lengthAdjust="spacingAndGlyphs" fill="#d2d2d2">RGB Balance</text>
<line x1="32" y1="139.6" x2="37" y2="139.6" stroke="#c8c8c8" stroke-width="1.4"/>
<text x="31" y="144.7" font-size="15.4" text-anchor="end" textLength="7.97" lengthAdjust="spacingAndGlyphs" fill="#dcdcdc">4</text>
<line x1="37" y1="200.1" x2="306" y2="200.1" stroke="#9c9c9c" stroke-width="1.6"/>
<line x1="32" y1="200.1" x2="37" y2="200.1" stroke="#c8c8c8" stroke-width="1.4"/>
<text x="31" y="205.48" font-size="15.4" text-anchor="end" textLength="7.97" lengthAdjust="spacingAndGlyphs" fill="#dcdcdc">3</text>
<line x1="37" y1="260.6" x2="306" y2="260.6" stroke="#9c9c9c" stroke-width="1.6"/>
<line x1="32" y1="260.6" x2="37" y2="260.6" stroke="#c8c8c8" stroke-width="1.4"/>
<text x="31" y="266.26" font-size="15.4" text-anchor="end" textLength="7.97" lengthAdjust="spacingAndGlyphs" fill="#dcdcdc">2</text>
<line x1="37" y1="321.1" x2="306" y2="321.1" stroke="#9c9c9c" stroke-width="1.6"/>
<line x1="32" y1="321.1" x2="37" y2="321.1" stroke="#c8c8c8" stroke-width="1.4"/>
<text x="31" y="327.04" font-size="15.4" text-anchor="end" textLength="7.97" lengthAdjust="spacingAndGlyphs" fill="#dcdcdc">1</text>
<line x1="37" y1="381.6" x2="306" y2="381.6" stroke="#9c9c9c" stroke-width="1.6"/>
<line x1="32" y1="381.6" x2="37" y2="381.6" stroke="#c8c8c8" stroke-width="1.4"/>
<text x="31" y="387.82" font-size="15.4" text-anchor="end" textLength="7.97" lengthAdjust="spacingAndGlyphs" fill="#dcdcdc">0</text>
<line x1="37" y1="442.1" x2="306" y2="442.1" stroke="#9c9c9c" stroke-width="1.6"/>
<line x1="32" y1="442.1" x2="37" y2="442.1" stroke="#c8c8c8" stroke-width="1.4"/>
<text x="31" y="448.6" font-size="15.4" text-anchor="end" textLength="12.74" lengthAdjust="spacingAndGlyphs" fill="#dcdcdc">-1</text>
<line x1="37" y1="502.6" x2="306" y2="502.6" stroke="#9c9c9c" stroke-width="1.6"/>
<line x1="32" y1="502.6" x2="37" y2="502.6" stroke="#c8c8c8" stroke-width="1.4"/>
<text x="31" y="509.38" font-size="15.4" text-anchor="end" textLength="12.74" lengthAdjust="spacingAndGlyphs" fill="#dcdcdc">-2</text>
<line x1="37" y1="563.1" x2="306" y2="563.1" stroke="#9c9c9c" stroke-width="1.6"/>
<line x1="32" y1="563.1" x2="37" y2="563.1" stroke="#c8c8c8" stroke-width="1.4"/>
<text x="31" y="570.16" font-size="15.4" text-anchor="end" textLength="12.74" lengthAdjust="spacingAndGlyphs" fill="#dcdcdc">-3</text>
<line x1="32" y1="623.6" x2="37" y2="623.6" stroke="#c8c8c8" stroke-width="1.4"/>
<text x="31" y="630.94" font-size="15.4" text-anchor="end" textLength="12.74" lengthAdjust="spacingAndGlyphs" fill="#dcdcdc">-4</text>
<rect x="63.5" y="278.5" width="70" height="103.1" fill="url(#g1)" stroke="#000" stroke-width="1.4"/>
<rect x="135.5" y="381.6" width="69" height="241" fill="url(#g2)" stroke="#0a0a0a" stroke-width="1.2"/>
<rect x="206.5" y="381.6" width="70" height="241" fill="url(#g3)" stroke="#0a0a0a" stroke-width="1.2"/>
<line x1="36.5" y1="138.6" x2="306.5" y2="138.6" stroke="#8e8e8e" stroke-width="2.8"/>
<line x1="37" y1="137.6" x2="37" y2="623.6" stroke="#a8a8a8" stroke-width="1.3"/>
<line x1="306" y1="137.6" x2="306" y2="623.6" stroke="#a8a8a8" stroke-width="1.25"/>
<line x1="37" y1="623.6" x2="306" y2="623.6" stroke="#8e8e8e" stroke-width="2.8"/>
<line x1="37" y1="623.6" x2="37" y2="630.1" stroke="#ececec" stroke-width="1.7"/>
<line x1="306" y1="623.6" x2="306" y2="630.1" stroke="#ececec" stroke-width="1.7"/>
<text x="171.5" y="641" font-size="15" text-anchor="middle" textLength="38" lengthAdjust="spacingAndGlyphs" fill="#dcdcdc">100%</text>
<text x="12" y="686.3" font-size="28.6" text-anchor="start" textLength="225" lengthAdjust="spacingAndGlyphs" fill="#f0f0f0">Current Reading</text>
<text x="11.5" y="732.8" font-size="23.7" text-anchor="start" textLength="105.5" lengthAdjust="spacingAndGlyphs" fill="#f0f0f0">x: 0,4319</text>
<text x="11.5" y="776.6" font-size="23.7" text-anchor="start" textLength="91.5" lengthAdjust="spacingAndGlyphs" fill="#f0f0f0">y: 0,499</text>
<text x="12" y="821.2" font-size="23.7" text-anchor="start" textLength="113.5" lengthAdjust="spacingAndGlyphs" fill="#f0f0f0">fL: 36,529</text>
<text x="12" y="865.2" font-size="23.7" text-anchor="start" textLength="177" lengthAdjust="spacingAndGlyphs" fill="#f0f0f0">cd/m²: 125,157</text>
<rect x="410" y="49" width="141" height="294" fill="#262626"/>
<text x="467.2" y="44" font-size="15.8" text-anchor="middle" textLength="42.8" lengthAdjust="spacingAndGlyphs" fill="#d2d2d2">DeltaL</text>
<line x1="410" y1="197.5" x2="551" y2="197.5" stroke="#8a8a8a" stroke-width="1.6"/>
<rect x="424.5" y="196.5" width="111.3" height="25.69" fill="url(#g4)" stroke="#000" stroke-width="1.6"/>
<rect x="410" y="95.33" width="141" height="2.2" fill="#7e2226"/>
<rect x="410" y="97.53" width="141" height="2" fill="#d84a4c"/>
<rect x="410" y="99.53" width="141" height="0.7" fill="#c08a8a"/>
<rect x="410" y="290.67" width="141" height="2.2" fill="#7e2226"/>
<rect x="410" y="292.87" width="141" height="2" fill="#d84a4c"/>
<rect x="410" y="294.87" width="141" height="0.7" fill="#c08a8a"/>
<rect x="410" y="145.97" width="141" height="1.6" fill="#8e8e40"/>
<rect x="410" y="147.57" width="141" height="1.9" fill="#e8e868"/>
<rect x="410" y="243.63" width="141" height="1.6" fill="#8e8e40"/>
<rect x="410" y="245.23" width="141" height="1.9" fill="#e8e868"/>
<rect x="410" y="165.5" width="141" height="1.7" fill="#14781e" fill-opacity="0.8"/>
<rect x="410" y="167.2" width="141" height="1.6" fill="#145a14" fill-opacity="0.4"/>
<rect x="410" y="224.1" width="141" height="1.7" fill="#14781e" fill-opacity="0.8"/>
<rect x="410" y="225.8" width="141" height="1.6" fill="#145a14" fill-opacity="0.4"/>
<line x1="409.5" y1="49.8" x2="551.5" y2="49.8" stroke="#909090" stroke-width="2.6"/>
<line x1="410" y1="49" x2="410" y2="343" stroke="#a8a8a8" stroke-width="1.25"/>
<line x1="551" y1="49" x2="551" y2="343" stroke="#a8a8a8" stroke-width="1.25"/>
<line x1="410" y1="342.5" x2="551" y2="342.5" stroke="#a8a8a8" stroke-width="1.6"/>
<line x1="410" y1="343" x2="410" y2="349" stroke="#ececec" stroke-width="1.7"/>
<line x1="551" y1="343" x2="551" y2="349" stroke="#ececec" stroke-width="1.7"/>
<line x1="405" y1="50.3" x2="410" y2="50.3" stroke="#c8c8c8" stroke-width="1.4"/>
<text x="403.5" y="55.9" font-size="15.5" text-anchor="end" textLength="16.03" lengthAdjust="spacingAndGlyphs" fill="#dcdcdc">15</text>
<line x1="405" y1="99.13" x2="410" y2="99.13" stroke="#c8c8c8" stroke-width="1.4"/>
<text x="403.5" y="104.73" font-size="15.5" text-anchor="end" textLength="16.03" lengthAdjust="spacingAndGlyphs" fill="#dcdcdc">10</text>
<line x1="405" y1="147.97" x2="410" y2="147.97" stroke="#c8c8c8" stroke-width="1.4"/>
<text x="403.5" y="153.57" font-size="15.5" text-anchor="end" textLength="8.02" lengthAdjust="spacingAndGlyphs" fill="#dcdcdc">5</text>
<line x1="405" y1="196.8" x2="410" y2="196.8" stroke="#c8c8c8" stroke-width="1.4"/>
<text x="403.5" y="202.4" font-size="15.5" text-anchor="end" textLength="8.02" lengthAdjust="spacingAndGlyphs" fill="#dcdcdc">0</text>
<line x1="405" y1="245.63" x2="410" y2="245.63" stroke="#c8c8c8" stroke-width="1.4"/>
<text x="403.5" y="251.23" font-size="15.5" text-anchor="end" textLength="12.82" lengthAdjust="spacingAndGlyphs" fill="#dcdcdc">-5</text>
<line x1="405" y1="294.47" x2="410" y2="294.47" stroke="#c8c8c8" stroke-width="1.4"/>
<text x="403.5" y="300.07" font-size="15.5" text-anchor="end" textLength="20.84" lengthAdjust="spacingAndGlyphs" fill="#dcdcdc">-10</text>
<line x1="405" y1="343.3" x2="410" y2="343.3" stroke="#c8c8c8" stroke-width="1.4"/>
<text x="403.5" y="348.9" font-size="15.5" text-anchor="end" textLength="20.84" lengthAdjust="spacingAndGlyphs" fill="#dcdcdc">-15</text>
<text x="481.45" y="359.7" font-size="15" text-anchor="middle" textLength="37.1" lengthAdjust="spacingAndGlyphs" fill="#dcdcdc">100%</text>
<rect x="606" y="49" width="141.5" height="294" fill="#262626"/>
<text x="663.5" y="44" font-size="15.8" text-anchor="middle" textLength="44.6" lengthAdjust="spacingAndGlyphs" fill="#d2d2d2">DeltaC</text>
<line x1="606" y1="197.5" x2="747.5" y2="197.5" stroke="#8a8a8a" stroke-width="1.6"/>
<rect x="620.6" y="187.22" width="112.4" height="9.28" fill="url(#g5)" stroke="#000" stroke-width="1.6"/>
<rect x="606" y="95.33" width="141.5" height="2.2" fill="#7e2226"/>
<rect x="606" y="97.53" width="141.5" height="2" fill="#d84a4c"/>
<rect x="606" y="99.53" width="141.5" height="0.7" fill="#c08a8a"/>
<rect x="606" y="290.67" width="141.5" height="2.2" fill="#7e2226"/>
<rect x="606" y="292.87" width="141.5" height="2" fill="#d84a4c"/>
<rect x="606" y="294.87" width="141.5" height="0.7" fill="#c08a8a"/>
<rect x="606" y="145.97" width="141.5" height="1.6" fill="#8e8e40"/>
<rect x="606" y="147.57" width="141.5" height="1.9" fill="#e8e868"/>
<rect x="606" y="243.63" width="141.5" height="1.6" fill="#8e8e40"/>
<rect x="606" y="245.23" width="141.5" height="1.9" fill="#e8e868"/>
<rect x="606" y="165.5" width="141.5" height="1.7" fill="#14781e" fill-opacity="0.8"/>
<rect x="606" y="167.2" width="141.5" height="1.6" fill="#145a14" fill-opacity="0.4"/>
<rect x="606" y="224.1" width="141.5" height="1.7" fill="#14781e" fill-opacity="0.8"/>
<rect x="606" y="225.8" width="141.5" height="1.6" fill="#145a14" fill-opacity="0.4"/>
<line x1="605.5" y1="49.8" x2="748" y2="49.8" stroke="#909090" stroke-width="2.6"/>
<line x1="606" y1="49" x2="606" y2="343" stroke="#a8a8a8" stroke-width="1.25"/>
<line x1="747.5" y1="49" x2="747.5" y2="343" stroke="#a8a8a8" stroke-width="1.25"/>
<line x1="606" y1="342.5" x2="747.5" y2="342.5" stroke="#a8a8a8" stroke-width="1.6"/>
<line x1="606" y1="343" x2="606" y2="349" stroke="#ececec" stroke-width="1.7"/>
<line x1="747.5" y1="343" x2="747.5" y2="349" stroke="#ececec" stroke-width="1.7"/>
<line x1="601" y1="50.3" x2="606" y2="50.3" stroke="#c8c8c8" stroke-width="1.4"/>
<text x="599.5" y="55.9" font-size="15.5" text-anchor="end" textLength="16.03" lengthAdjust="spacingAndGlyphs" fill="#dcdcdc">15</text>
<line x1="601" y1="99.13" x2="606" y2="99.13" stroke="#c8c8c8" stroke-width="1.4"/>
<text x="599.5" y="104.73" font-size="15.5" text-anchor="end" textLength="16.03" lengthAdjust="spacingAndGlyphs" fill="#dcdcdc">10</text>
<line x1="601" y1="147.97" x2="606" y2="147.97" stroke="#c8c8c8" stroke-width="1.4"/>
<text x="599.5" y="153.57" font-size="15.5" text-anchor="end" textLength="8.02" lengthAdjust="spacingAndGlyphs" fill="#dcdcdc">5</text>
<line x1="601" y1="196.8" x2="606" y2="196.8" stroke="#c8c8c8" stroke-width="1.4"/>
<text x="599.5" y="202.4" font-size="15.5" text-anchor="end" textLength="8.02" lengthAdjust="spacingAndGlyphs" fill="#dcdcdc">0</text>
<line x1="601" y1="245.63" x2="606" y2="245.63" stroke="#c8c8c8" stroke-width="1.4"/>
<text x="599.5" y="251.23" font-size="15.5" text-anchor="end" textLength="12.82" lengthAdjust="spacingAndGlyphs" fill="#dcdcdc">-5</text>
<line x1="601" y1="294.47" x2="606" y2="294.47" stroke="#c8c8c8" stroke-width="1.4"/>
<text x="599.5" y="300.07" font-size="15.5" text-anchor="end" textLength="20.84" lengthAdjust="spacingAndGlyphs" fill="#dcdcdc">-10</text>
<line x1="601" y1="343.3" x2="606" y2="343.3" stroke="#c8c8c8" stroke-width="1.4"/>
<text x="599.5" y="348.9" font-size="15.5" text-anchor="end" textLength="20.84" lengthAdjust="spacingAndGlyphs" fill="#dcdcdc">-15</text>
<text x="677.85" y="359.7" font-size="15" text-anchor="middle" textLength="37.3" lengthAdjust="spacingAndGlyphs" fill="#dcdcdc">100%</text>
<rect x="802.5" y="49" width="141.5" height="294" fill="#262626"/>
<text x="859.5" y="44" font-size="15.8" text-anchor="middle" textLength="45.4" lengthAdjust="spacingAndGlyphs" fill="#d2d2d2">DeltaH</text>
<line x1="802.5" y1="197.5" x2="944" y2="197.5" stroke="#8a8a8a" stroke-width="1.6"/>
<rect x="817" y="196.5" width="112" height="52.74" fill="url(#g6)" stroke="#000" stroke-width="1.6"/>
<rect x="802.5" y="95.33" width="141.5" height="2.2" fill="#7e2226"/>
<rect x="802.5" y="97.53" width="141.5" height="2" fill="#d84a4c"/>
<rect x="802.5" y="99.53" width="141.5" height="0.7" fill="#c08a8a"/>
<rect x="802.5" y="290.67" width="141.5" height="2.2" fill="#7e2226"/>
<rect x="802.5" y="292.87" width="141.5" height="2" fill="#d84a4c"/>
<rect x="802.5" y="294.87" width="141.5" height="0.7" fill="#c08a8a"/>
<rect x="802.5" y="145.97" width="141.5" height="1.6" fill="#8e8e40"/>
<rect x="802.5" y="147.57" width="141.5" height="1.9" fill="#e8e868"/>
<rect x="802.5" y="243.63" width="141.5" height="1.6" fill="#8e8e40"/>
<rect x="802.5" y="245.23" width="141.5" height="1.9" fill="#e8e868"/>
<rect x="802.5" y="165.5" width="141.5" height="1.7" fill="#14781e" fill-opacity="0.8"/>
<rect x="802.5" y="167.2" width="141.5" height="1.6" fill="#145a14" fill-opacity="0.4"/>
<rect x="802.5" y="224.1" width="141.5" height="1.7" fill="#14781e" fill-opacity="0.8"/>
<rect x="802.5" y="225.8" width="141.5" height="1.6" fill="#145a14" fill-opacity="0.4"/>
<line x1="802" y1="49.8" x2="944.5" y2="49.8" stroke="#909090" stroke-width="2.6"/>
<line x1="802.5" y1="49" x2="802.5" y2="343" stroke="#a8a8a8" stroke-width="1.25"/>
<line x1="944" y1="49" x2="944" y2="343" stroke="#a8a8a8" stroke-width="1.25"/>
<line x1="802.5" y1="342.5" x2="944" y2="342.5" stroke="#a8a8a8" stroke-width="1.6"/>
<line x1="802.5" y1="343" x2="802.5" y2="349" stroke="#ececec" stroke-width="1.7"/>
<line x1="944" y1="343" x2="944" y2="349" stroke="#ececec" stroke-width="1.7"/>
<line x1="797.5" y1="50.3" x2="802.5" y2="50.3" stroke="#c8c8c8" stroke-width="1.4"/>
<text x="796" y="55.9" font-size="15.5" text-anchor="end" textLength="16.03" lengthAdjust="spacingAndGlyphs" fill="#dcdcdc">15</text>
<line x1="797.5" y1="99.13" x2="802.5" y2="99.13" stroke="#c8c8c8" stroke-width="1.4"/>
<text x="796" y="104.73" font-size="15.5" text-anchor="end" textLength="16.03" lengthAdjust="spacingAndGlyphs" fill="#dcdcdc">10</text>
<line x1="797.5" y1="147.97" x2="802.5" y2="147.97" stroke="#c8c8c8" stroke-width="1.4"/>
<text x="796" y="153.57" font-size="15.5" text-anchor="end" textLength="8.02" lengthAdjust="spacingAndGlyphs" fill="#dcdcdc">5</text>
<line x1="797.5" y1="196.8" x2="802.5" y2="196.8" stroke="#c8c8c8" stroke-width="1.4"/>
<text x="796" y="202.4" font-size="15.5" text-anchor="end" textLength="8.02" lengthAdjust="spacingAndGlyphs" fill="#dcdcdc">0</text>
<line x1="797.5" y1="245.63" x2="802.5" y2="245.63" stroke="#c8c8c8" stroke-width="1.4"/>
<text x="796" y="251.23" font-size="15.5" text-anchor="end" textLength="12.82" lengthAdjust="spacingAndGlyphs" fill="#dcdcdc">-5</text>
<line x1="797.5" y1="294.47" x2="802.5" y2="294.47" stroke="#c8c8c8" stroke-width="1.4"/>
<text x="796" y="300.07" font-size="15.5" text-anchor="end" textLength="20.84" lengthAdjust="spacingAndGlyphs" fill="#dcdcdc">-10</text>
<line x1="797.5" y1="343.3" x2="802.5" y2="343.3" stroke="#c8c8c8" stroke-width="1.4"/>
<text x="796" y="348.9" font-size="15.5" text-anchor="end" textLength="20.84" lengthAdjust="spacingAndGlyphs" fill="#dcdcdc">-15</text>
<text x="874.05" y="359.7" font-size="15" text-anchor="middle" textLength="36.9" lengthAdjust="spacingAndGlyphs" fill="#dcdcdc">100%</text>
<rect x="341" y="378" width="638" height="177.5" fill="#000"/>
<rect x="362.5" y="386.5" width="106.2" height="62" fill="#c2bea3" stroke="#f4f4f4" stroke-width="1.2"/>
<rect x="362.5" y="467.5" width="106.2" height="62" fill="#c0c0a5" stroke="#f4f4f4" stroke-width="1.2"/>
<text x="416" y="545.6" font-size="12.8" text-anchor="middle" textLength="24" lengthAdjust="spacingAndGlyphs" fill="#fff" font-weight="bold">20%</text>
<rect x="487.5" y="386.5" width="106.2" height="62" fill="#c2ba86" stroke="#f4f4f4" stroke-width="1.2"/>
<rect x="487.5" y="467.5" width="106.2" height="62" fill="#c2c28a" stroke="#f4f4f4" stroke-width="1.2"/>
<text x="541" y="545.6" font-size="12.8" text-anchor="middle" textLength="24" lengthAdjust="spacingAndGlyphs" fill="#fff" font-weight="bold">40%</text>
<rect x="612.5" y="386.5" width="106.2" height="62" fill="#c3bb74" stroke="#f4f4f4" stroke-width="1.2"/>
<rect x="612.5" y="467.5" width="106.2" height="62" fill="#c1c171" stroke="#f4f4f4" stroke-width="1.2"/>
<text x="666" y="545.6" font-size="12.8" text-anchor="middle" textLength="24" lengthAdjust="spacingAndGlyphs" fill="#fff" font-weight="bold">60%</text>
<rect x="737.5" y="386.5" width="106.2" height="62" fill="#c5b54c" stroke="#f4f4f4" stroke-width="1.2"/>
<rect x="737.5" y="467.5" width="106.2" height="62" fill="#c3c352" stroke="#f4f4f4" stroke-width="1.2"/>
<text x="791" y="545.6" font-size="12.8" text-anchor="middle" textLength="24" lengthAdjust="spacingAndGlyphs" fill="#fff" font-weight="bold">80%</text>
<rect x="862.5" y="386.5" width="106.2" height="62" fill="#c5b500" stroke="#f4f4f4" stroke-width="1.2"/>
<rect x="862.5" y="467.5" width="106.2" height="62" fill="#c4c414" stroke="#f4f4f4" stroke-width="1.2"/>
<text x="916" y="545.6" font-size="12.8" text-anchor="middle" textLength="31" lengthAdjust="spacingAndGlyphs" fill="#fff" font-weight="bold">100%</text>
<text x="0" y="0" font-size="12.8" text-anchor="middle" textLength="37.6" lengthAdjust="spacingAndGlyphs" fill="#fff" font-weight="bold" transform="translate(354.6 417.2) rotate(-90)">Actual</text>
<text x="0" y="0" font-size="12.8" text-anchor="middle" textLength="36.4" lengthAdjust="spacingAndGlyphs" fill="#fff" font-weight="bold" transform="translate(354.6 498.2) rotate(-90)">Target</text>
<rect x="355" y="590" width="624" height="271" fill="#262626"/>
<text x="656.4" y="584.5" font-size="15.8" text-anchor="middle" textLength="81.6" lengthAdjust="spacingAndGlyphs" fill="#d2d2d2">DeltaE 2000</text>
<rect x="432" y="857.5" width="10" height="3.5" fill="#101010" stroke="#000" stroke-width="1"/>
<rect x="469.6" y="774.86" width="10.7" height="86.14" fill="#000"/>
<rect x="470.5" y="775.86" width="8.7" height="85.14" fill="url(#g7)"/>
<rect x="480.85" y="777.38" width="10.7" height="83.62" fill="#000"/>
<rect x="481.75" y="778.38" width="8.7" height="82.62" fill="url(#g8)"/>
<rect x="492.1" y="801.68" width="10.7" height="59.32" fill="#000"/>
<rect x="493" y="802.68" width="8.7" height="58.32" fill="url(#g9)"/>
<rect x="503.35" y="805.46" width="10.7" height="55.54" fill="#000"/>
<rect x="504.25" y="806.46" width="8.7" height="54.54" fill="url(#g10)"/>
<rect x="514.6" y="778.64" width="10.7" height="82.36" fill="#000"/>
<rect x="515.5" y="779.64" width="8.7" height="81.36" fill="url(#g11)"/>
<rect x="525.85" y="828.14" width="10.7" height="32.86" fill="#000"/>
<rect x="526.75" y="829.14" width="8.7" height="31.86" fill="url(#g12)"/>
<rect x="573.6" y="761.54" width="10.7" height="99.46" fill="#000"/>
<rect x="574.5" y="762.54" width="8.7" height="98.46" fill="url(#g13)"/>
<rect x="584.85" y="759.92" width="10.7" height="101.08" fill="#000"/>
<rect x="585.75" y="760.92" width="8.7" height="100.08" fill="url(#g14)"/>
<rect x="596.1" y="766.4" width="10.7" height="94.6" fill="#000"/>
<rect x="597" y="767.4" width="8.7" height="93.6" fill="url(#g15)"/>
<rect x="607.35" y="780.44" width="10.7" height="80.56" fill="#000"/>
<rect x="608.25" y="781.44" width="8.7" height="79.56" fill="url(#g16)"/>
<rect x="618.6" y="758.48" width="10.7" height="102.52" fill="#000"/>
<rect x="619.5" y="759.48" width="8.7" height="101.52" fill="url(#g17)"/>
<rect x="629.85" y="818.96" width="10.7" height="42.04" fill="#000"/>
<rect x="630.75" y="819.96" width="8.7" height="41.04" fill="url(#g18)"/>
<rect x="677.6" y="755.78" width="10.7" height="105.22" fill="#000"/>
<rect x="678.5" y="756.78" width="8.7" height="104.22" fill="url(#g19)"/>
<rect x="688.85" y="741.56" width="10.7" height="119.44" fill="#000"/>
<rect x="689.75" y="742.56" width="8.7" height="118.44" fill="url(#g20)"/>
<rect x="700.1" y="720.14" width="10.7" height="140.86" fill="#000"/>
<rect x="701" y="721.14" width="8.7" height="139.86" fill="url(#g21)"/>
<rect x="711.35" y="765.32" width="10.7" height="95.68" fill="#000"/>
<rect x="712.25" y="766.32" width="8.7" height="94.68" fill="url(#g22)"/>
<rect x="722.6" y="735.98" width="10.7" height="125.02" fill="#000"/>
<rect x="723.5" y="736.98" width="8.7" height="124.02" fill="url(#g23)"/>
<rect x="733.85" y="809.78" width="10.7" height="51.22" fill="#000"/>
<rect x="734.75" y="810.78" width="8.7" height="50.22" fill="url(#g24)"/>
<rect x="781.6" y="747.86" width="10.7" height="113.14" fill="#000"/>
<rect x="782.5" y="748.86" width="8.7" height="112.14" fill="url(#g25)"/>
<rect x="792.85" y="730.04" width="10.7" height="130.96" fill="#000"/>
<rect x="793.75" y="731.04" width="8.7" height="129.96" fill="url(#g26)"/>
<rect x="804.1" y="681.08" width="10.7" height="179.92" fill="#000"/>
<rect x="805" y="682.08" width="8.7" height="178.92" fill="url(#g27)"/>
<rect x="815.35" y="759.02" width="10.7" height="101.98" fill="#000"/>
<rect x="816.25" y="760.02" width="8.7" height="100.98" fill="url(#g28)"/>
<rect x="826.6" y="718.34" width="10.7" height="142.66" fill="#000"/>
<rect x="827.5" y="719.34" width="8.7" height="141.66" fill="url(#g29)"/>
<rect x="837.85" y="805.64" width="10.7" height="55.36" fill="#000"/>
<rect x="838.75" y="806.64" width="8.7" height="54.36" fill="url(#g30)"/>
<rect x="885.6" y="753.08" width="10.7" height="107.92" fill="#000"/>
<rect x="886.5" y="754.08" width="8.7" height="106.92" fill="url(#g31)"/>
<rect x="896.85" y="712.58" width="10.7" height="148.42" fill="#000"/>
<rect x="897.75" y="713.58" width="8.7" height="147.42" fill="url(#g32)"/>
<rect x="908.1" y="590" width="10.7" height="271" fill="#000"/>
<rect x="909" y="591" width="8.7" height="270" fill="url(#g33)"/>
<rect x="919.35" y="746.96" width="10.7" height="114.04" fill="#000"/>
<rect x="920.25" y="747.96" width="8.7" height="113.04" fill="url(#g34)"/>
<rect x="930.6" y="691.34" width="10.7" height="169.66" fill="#000"/>
<rect x="931.5" y="692.34" width="8.7" height="168.66" fill="url(#g35)"/>
<rect x="941.85" y="797" width="10.7" height="64" fill="#000"/>
<rect x="942.75" y="798" width="8.7" height="63" fill="url(#g36)"/>
<rect x="355" y="678.8" width="624" height="1.9" fill="#8e1c20"/>
<rect x="355" y="680.7" width="624" height="1.3" fill="#cc4448"/>
<rect x="355" y="682" width="624" height="0.6" fill="#a88484"/>
<rect x="355" y="768.5" width="624" height="2.3" fill="#f2ea3c"/>
<rect x="355" y="771.4" width="624" height="1.3" fill="#90906c"/>
<rect x="355" y="805.7" width="624" height="1.7" fill="#14781e" fill-opacity="0.85"/>
<rect x="355" y="807.4" width="624" height="1.2" fill="#145a14" fill-opacity="0.4"/>
<line x1="354.5" y1="590.7" x2="979.5" y2="590.7" stroke="#909090" stroke-width="2.4"/>
<line x1="355.5" y1="590" x2="355.5" y2="861" stroke="#a8a8a8" stroke-width="1.3"/>
<line x1="979" y1="590" x2="979" y2="861" stroke="#a8a8a8" stroke-width="1.3"/>
<line x1="355" y1="860.7" x2="979" y2="860.7" stroke="#a8a8a8" stroke-width="2"/>
<line x1="355.5" y1="861" x2="355.5" y2="867" stroke="#ececec" stroke-width="1.7"/>
<line x1="459" y1="861" x2="459" y2="867" stroke="#ececec" stroke-width="1.7"/>
<line x1="563" y1="861" x2="563" y2="867" stroke="#ececec" stroke-width="1.7"/>
<line x1="667" y1="861" x2="667" y2="867" stroke="#ececec" stroke-width="1.7"/>
<line x1="771" y1="861" x2="771" y2="867" stroke="#ececec" stroke-width="1.7"/>
<line x1="875" y1="861" x2="875" y2="867" stroke="#ececec" stroke-width="1.7"/>
<line x1="979" y1="861" x2="979" y2="867" stroke="#ececec" stroke-width="1.7"/>
<line x1="350" y1="591" x2="355" y2="591" stroke="#c8c8c8" stroke-width="1.4"/>
<text x="348.7" y="597.3" font-size="15.6" text-anchor="end" textLength="16.14" lengthAdjust="spacingAndGlyphs" fill="#dcdcdc">15</text>
<line x1="350" y1="681" x2="355" y2="681" stroke="#c8c8c8" stroke-width="1.4"/>
<text x="348.7" y="687.3" font-size="15.6" text-anchor="end" textLength="16.14" lengthAdjust="spacingAndGlyphs" fill="#dcdcdc">10</text>
<line x1="350" y1="771" x2="355" y2="771" stroke="#c8c8c8" stroke-width="1.4"/>
<text x="348.7" y="777.3" font-size="15.6" text-anchor="end" textLength="8.07" lengthAdjust="spacingAndGlyphs" fill="#dcdcdc">5</text>
<line x1="350" y1="861" x2="355" y2="861" stroke="#c8c8c8" stroke-width="1.4"/>
<text x="348.7" y="867.3" font-size="15.6" text-anchor="end" textLength="8.07" lengthAdjust="spacingAndGlyphs" fill="#dcdcdc">0</text>
<text x="406.9" y="877.7" font-size="15.4" text-anchor="middle" textLength="25.4" lengthAdjust="spacingAndGlyphs" fill="#dcdcdc">100</text>
<text x="511.35" y="877.7" font-size="15.4" text-anchor="middle" textLength="28.9" lengthAdjust="spacingAndGlyphs" fill="#dcdcdc">20%</text>
<text x="614.85" y="877.7" font-size="15.4" text-anchor="middle" textLength="28.9" lengthAdjust="spacingAndGlyphs" fill="#dcdcdc">40%</text>
<text x="719.85" y="877.7" font-size="15.4" text-anchor="middle" textLength="28.9" lengthAdjust="spacingAndGlyphs" fill="#dcdcdc">60%</text>
<text x="823.75" y="877.7" font-size="15.4" text-anchor="middle" textLength="28.9" lengthAdjust="spacingAndGlyphs" fill="#dcdcdc">80%</text>
<text x="927.75" y="877.7" font-size="15.4" text-anchor="middle" textLength="37.9" lengthAdjust="spacingAndGlyphs" fill="#dcdcdc">100%</text>
<rect x="1000" y="15.2" width="712" height="621.4" fill="#000"/>
<rect x="1007" y="21.8" width="701" height="607.9" fill="#333333"/>
<rect x="1037" y="48" width="668" height="550.3" fill="#262626"/>
<text x="1357.8" y="42.3" font-size="15.6" text-anchor="middle" textLength="78.5" lengthAdjust="spacingAndGlyphs" fill="#d2d2d2">CIE 1931 xy</text>
<g clip-path="url(#hs)"><use href="#ciefill"/></g>
<line x1="1036.5" y1="48" x2="1705.5" y2="48" stroke="#9a9a9a" stroke-width="2"/>
<line x1="1037" y1="48" x2="1037" y2="604.3" stroke="#a8a8a8" stroke-width="1.3"/>
<line x1="1704.4" y1="48" x2="1704.4" y2="598.3" stroke="#a8a8a8" stroke-width="1.3"/>
<line x1="1037" y1="598.3" x2="1705" y2="598.3" stroke="#a8a8a8" stroke-width="1.8"/>
<line x1="1036.9" y1="598.3" x2="1036.9" y2="604.3" stroke="#d8d8d8" stroke-width="1.6"/>
<text x="1036.9" y="621.9" font-size="14.8" text-anchor="middle" textLength="9.3" lengthAdjust="spacingAndGlyphs" fill="#dcdcdc">0</text>
<line x1="1032" y1="598.2" x2="1037" y2="598.2" stroke="#c8c8c8" stroke-width="1.4"/>
<text x="1031.5" y="603.8" font-size="14.8" text-anchor="end" textLength="9.3" lengthAdjust="spacingAndGlyphs" fill="#dcdcdc">0</text>
<line x1="1116.35" y1="598.3" x2="1116.35" y2="604.3" stroke="#d8d8d8" stroke-width="1.6"/>
<text x="1116.35" y="621.9" font-size="14.8" text-anchor="middle" textLength="20.3" lengthAdjust="spacingAndGlyphs" fill="#dcdcdc">0,1</text>
<line x1="1032" y1="532.82" x2="1037" y2="532.82" stroke="#c8c8c8" stroke-width="1.4"/>
<text x="1031.5" y="538.42" font-size="14.8" text-anchor="end" textLength="20.3" lengthAdjust="spacingAndGlyphs" fill="#dcdcdc">0,1</text>
<line x1="1195.8" y1="598.3" x2="1195.8" y2="604.3" stroke="#d8d8d8" stroke-width="1.6"/>
<text x="1195.8" y="621.9" font-size="14.8" text-anchor="middle" textLength="20.3" lengthAdjust="spacingAndGlyphs" fill="#dcdcdc">0,2</text>
<line x1="1032" y1="467.44" x2="1037" y2="467.44" stroke="#c8c8c8" stroke-width="1.4"/>
<text x="1031.5" y="473.04" font-size="14.8" text-anchor="end" textLength="20.3" lengthAdjust="spacingAndGlyphs" fill="#dcdcdc">0,2</text>
<line x1="1275.25" y1="598.3" x2="1275.25" y2="604.3" stroke="#d8d8d8" stroke-width="1.6"/>
<text x="1275.25" y="621.9" font-size="14.8" text-anchor="middle" textLength="20.3" lengthAdjust="spacingAndGlyphs" fill="#dcdcdc">0,3</text>
<line x1="1032" y1="402.06" x2="1037" y2="402.06" stroke="#c8c8c8" stroke-width="1.4"/>
<text x="1031.5" y="407.66" font-size="14.8" text-anchor="end" textLength="20.3" lengthAdjust="spacingAndGlyphs" fill="#dcdcdc">0,3</text>
<line x1="1354.7" y1="598.3" x2="1354.7" y2="604.3" stroke="#d8d8d8" stroke-width="1.6"/>
<text x="1354.7" y="621.9" font-size="14.8" text-anchor="middle" textLength="20.3" lengthAdjust="spacingAndGlyphs" fill="#dcdcdc">0,4</text>
<line x1="1032" y1="336.68" x2="1037" y2="336.68" stroke="#c8c8c8" stroke-width="1.4"/>
<text x="1031.5" y="342.28" font-size="14.8" text-anchor="end" textLength="20.3" lengthAdjust="spacingAndGlyphs" fill="#dcdcdc">0,4</text>
<line x1="1434.15" y1="598.3" x2="1434.15" y2="604.3" stroke="#d8d8d8" stroke-width="1.6"/>
<text x="1434.15" y="621.9" font-size="14.8" text-anchor="middle" textLength="20.3" lengthAdjust="spacingAndGlyphs" fill="#dcdcdc">0,5</text>
<line x1="1032" y1="271.3" x2="1037" y2="271.3" stroke="#c8c8c8" stroke-width="1.4"/>
<text x="1031.5" y="276.9" font-size="14.8" text-anchor="end" textLength="20.3" lengthAdjust="spacingAndGlyphs" fill="#dcdcdc">0,5</text>
<line x1="1513.6" y1="598.3" x2="1513.6" y2="604.3" stroke="#d8d8d8" stroke-width="1.6"/>
<text x="1513.6" y="621.9" font-size="14.8" text-anchor="middle" textLength="20.3" lengthAdjust="spacingAndGlyphs" fill="#dcdcdc">0,6</text>
<line x1="1032" y1="205.92" x2="1037" y2="205.92" stroke="#c8c8c8" stroke-width="1.4"/>
<text x="1031.5" y="211.52" font-size="14.8" text-anchor="end" textLength="20.3" lengthAdjust="spacingAndGlyphs" fill="#dcdcdc">0,6</text>
<line x1="1593.05" y1="598.3" x2="1593.05" y2="604.3" stroke="#d8d8d8" stroke-width="1.6"/>
<text x="1593.05" y="621.9" font-size="14.8" text-anchor="middle" textLength="20.3" lengthAdjust="spacingAndGlyphs" fill="#dcdcdc">0,7</text>
<line x1="1032" y1="140.54" x2="1037" y2="140.54" stroke="#c8c8c8" stroke-width="1.4"/>
<text x="1031.5" y="146.14" font-size="14.8" text-anchor="end" textLength="20.3" lengthAdjust="spacingAndGlyphs" fill="#dcdcdc">0,7</text>
<line x1="1672.5" y1="598.3" x2="1672.5" y2="604.3" stroke="#d8d8d8" stroke-width="1.6"/>
<text x="1672.5" y="621.9" font-size="14.8" text-anchor="middle" textLength="20.3" lengthAdjust="spacingAndGlyphs" fill="#dcdcdc">0,8</text>
<line x1="1032" y1="75.16" x2="1037" y2="75.16" stroke="#c8c8c8" stroke-width="1.4"/>
<text x="1031.5" y="80.76" font-size="14.8" text-anchor="end" textLength="20.3" lengthAdjust="spacingAndGlyphs" fill="#dcdcdc">0,8</text>
<rect x="1328" y="374.3" width="15.2" height="15.2" fill="none" stroke="#ffffff" stroke-opacity="0.78" stroke-width="1.9"/>
<rect x="1381.8" y="374.3" width="15.2" height="15.2" fill="none" stroke="#ffffff" stroke-opacity="0.78" stroke-width="1.9"/>
<rect x="1428.8" y="374.3" width="15.2" height="15.2" fill="none" stroke="#ffffff" stroke-opacity="0.78" stroke-width="1.9"/>
<rect x="1480.4" y="374.3" width="15.2" height="15.2" fill="none" stroke="#ffffff" stroke-opacity="0.78" stroke-width="1.9"/>
<rect x="1537.4" y="374.3" width="15.2" height="15.2" fill="none" stroke="#ffffff" stroke-opacity="0.78" stroke-width="1.9"/>
<rect x="1251.7" y="409.5" width="15.2" height="15.2" fill="none" stroke="#ffffff" stroke-opacity="0.78" stroke-width="1.9"/>
<rect x="1225" y="445.4" width="15.2" height="15.2" fill="none" stroke="#ffffff" stroke-opacity="0.78" stroke-width="1.9"/>
<rect x="1201.4" y="477.9" width="15.2" height="15.2" fill="none" stroke="#ffffff" stroke-opacity="0.78" stroke-width="1.9"/>
<rect x="1175.8" y="511.9" width="15.2" height="15.2" fill="none" stroke="#ffffff" stroke-opacity="0.78" stroke-width="1.9"/>
<rect x="1148" y="550.3" width="15.2" height="15.2" fill="none" stroke="#ffffff" stroke-opacity="0.78" stroke-width="1.9"/>
<rect x="1267" y="196.5" width="15.2" height="15.2" fill="none" stroke="#ffffff" stroke-opacity="0.78" stroke-width="1.9"/>
<rect x="1269.8" y="234.8" width="15.2" height="15.2" fill="none" stroke="#ffffff" stroke-opacity="0.78" stroke-width="1.9"/>
<rect x="1271.5" y="269" width="15.2" height="15.2" fill="none" stroke="#ffffff" stroke-opacity="0.78" stroke-width="1.9"/>
<rect x="1273" y="303.5" width="15.2" height="15.2" fill="none" stroke="#ffffff" stroke-opacity="0.78" stroke-width="1.9"/>
<rect x="1275.1" y="338.8" width="15.2" height="15.2" fill="none" stroke="#ffffff" stroke-opacity="0.78" stroke-width="1.9"/>
<rect x="1362.6" y="258.5" width="15.2" height="15.2" fill="none" stroke="#ffffff" stroke-opacity="0.78" stroke-width="1.9"/>
<rect x="1344.3" y="283.1" width="15.2" height="15.2" fill="none" stroke="#ffffff" stroke-opacity="0.78" stroke-width="1.9"/>
<rect x="1328.5" y="303.8" width="15.2" height="15.2" fill="none" stroke="#ffffff" stroke-opacity="0.78" stroke-width="1.9"/>
<rect x="1311.3" y="327.5" width="15.2" height="15.2" fill="none" stroke="#ffffff" stroke-opacity="0.78" stroke-width="1.9"/>
<rect x="1294.3" y="351.1" width="15.2" height="15.2" fill="none" stroke="#ffffff" stroke-opacity="0.78" stroke-width="1.9"/>
<rect x="1278.5" y="397.5" width="15.2" height="15.2" fill="none" stroke="#ffffff" stroke-opacity="0.78" stroke-width="1.9"/>
<rect x="1279.9" y="421.1" width="15.2" height="15.2" fill="none" stroke="#ffffff" stroke-opacity="0.78" stroke-width="1.9"/>
<rect x="1280.9" y="442.5" width="15.2" height="15.2" fill="none" stroke="#ffffff" stroke-opacity="0.78" stroke-width="1.9"/>
<rect x="1282.8" y="464.6" width="15.2" height="15.2" fill="none" stroke="#ffffff" stroke-opacity="0.78" stroke-width="1.9"/>
<rect x="1283.8" y="488.6" width="15.2" height="15.2" fill="none" stroke="#ffffff" stroke-opacity="0.78" stroke-width="1.9"/>
<rect x="1206.7" y="374.3" width="15.2" height="15.2" fill="none" stroke="#ffffff" stroke-opacity="0.78" stroke-width="1.9"/>
<rect x="1222" y="374.3" width="15.2" height="15.2" fill="none" stroke="#ffffff" stroke-opacity="0.78" stroke-width="1.9"/>
<rect x="1235.8" y="374.3" width="15.2" height="15.2" fill="none" stroke="#ffffff" stroke-opacity="0.78" stroke-width="1.9"/>
<rect x="1249.6" y="374.3" width="15.2" height="15.2" fill="none" stroke="#ffffff" stroke-opacity="0.78" stroke-width="1.9"/>
<rect x="1263.1" y="374.3" width="15.2" height="15.2" fill="none" stroke="#ffffff" stroke-opacity="0.78" stroke-width="1.9"/>
<circle cx="1324" cy="376.8" r="4.9" fill="#be8c8c" stroke="#000" stroke-opacity="0.8" stroke-width="1.3"/>
<circle cx="1364.4" cy="372.8" r="4.9" fill="#be6e6e" stroke="#000" stroke-opacity="0.8" stroke-width="1.3"/>
<circle cx="1408" cy="367.8" r="4.9" fill="#c85a5a" stroke="#000" stroke-opacity="0.8" stroke-width="1.3"/>
<circle cx="1454.5" cy="363.8" r="4.9" fill="#c83c3c" stroke="#000" stroke-opacity="0.8" stroke-width="1.3"/>
<circle cx="1499.6" cy="359.4" r="4.9" fill="#c80000" stroke="#000" stroke-opacity="0.8" stroke-width="1.3"/>
<circle cx="1291.4" cy="351.8" r="4.9" fill="#aabea0" stroke="#000" stroke-opacity="0.8" stroke-width="1.3"/>
<circle cx="1297.5" cy="321" r="4.9" fill="#96be8c" stroke="#000" stroke-opacity="0.8" stroke-width="1.3"/>
<circle cx="1304.4" cy="291.5" r="4.9" fill="#78be78" stroke="#000" stroke-opacity="0.8" stroke-width="1.3"/>
<circle cx="1311.5" cy="256.9" r="4.9" fill="#5abe5a" stroke="#000" stroke-opacity="0.8" stroke-width="1.3"/>
<circle cx="1316.9" cy="226.1" r="4.9" fill="#14be14" stroke="#000" stroke-opacity="0.8" stroke-width="1.3"/>
<circle cx="1259.4" cy="413" r="4.9" fill="#9696be" stroke="#000" stroke-opacity="0.8" stroke-width="1.3"/>
<circle cx="1234.4" cy="442.6" r="4.9" fill="#8282be" stroke="#000" stroke-opacity="0.8" stroke-width="1.3"/>
<circle cx="1210.3" cy="468.6" r="4.9" fill="#6e6ebe" stroke="#000" stroke-opacity="0.8" stroke-width="1.3"/>
<circle cx="1186.4" cy="499" r="4.9" fill="#5050be" stroke="#000" stroke-opacity="0.8" stroke-width="1.3"/>
<circle cx="1163.8" cy="523.7" r="4.9" fill="#140abe" stroke="#000" stroke-opacity="0.8" stroke-width="1.3"/>
<circle cx="1274.8" cy="382.9" r="4.9" fill="#aabebe" stroke="#000" stroke-opacity="0.8" stroke-width="1.3"/>
<circle cx="1265.1" cy="384.8" r="4.9" fill="#8cbebe" stroke="#000" stroke-opacity="0.8" stroke-width="1.3"/>
<circle cx="1253.5" cy="384.8" r="4.9" fill="#78bebe" stroke="#000" stroke-opacity="0.8" stroke-width="1.3"/>
<circle cx="1244" cy="385.9" r="4.9" fill="#5abebe" stroke="#000" stroke-opacity="0.8" stroke-width="1.3"/>
<circle cx="1234.4" cy="388" r="4.9" fill="#1ebebe" stroke="#000" stroke-opacity="0.8" stroke-width="1.3"/>
<circle cx="1280.4" cy="400.9" r="4.9" fill="#be96b4" stroke="#000" stroke-opacity="0.8" stroke-width="1.3"/>
<circle cx="1276.6" cy="420" r="4.9" fill="#be82b4" stroke="#000" stroke-opacity="0.8" stroke-width="1.3"/>
<circle cx="1273.4" cy="436.5" r="4.9" fill="#be6eb4" stroke="#000" stroke-opacity="0.8" stroke-width="1.3"/>
<circle cx="1269.3" cy="456" r="4.9" fill="#be50aa" stroke="#000" stroke-opacity="0.8" stroke-width="1.3"/>
<circle cx="1265.1" cy="474.9" r="4.9" fill="#c814aa" stroke="#000" stroke-opacity="0.8" stroke-width="1.3"/>
<circle cx="1303" cy="361.1" r="4.9" fill="#bebea0" stroke="#000" stroke-opacity="0.8" stroke-width="1.3"/>
<circle cx="1322.3" cy="338.9" r="4.9" fill="#bebe82" stroke="#000" stroke-opacity="0.8" stroke-width="1.3"/>
<circle cx="1340.5" cy="316.2" r="4.9" fill="#bebe6e" stroke="#000" stroke-opacity="0.8" stroke-width="1.3"/>
<circle cx="1359" cy="294" r="4.9" fill="#bebe5a" stroke="#000" stroke-opacity="0.8" stroke-width="1.3"/>
<circle cx="1379.9" cy="271" r="4.9" fill="#c8be1e" stroke="#000" stroke-opacity="0.8" stroke-width="1.3"/>
<rect x="1276.8" y="374.1" width="15.6" height="15.6" fill="none" stroke="#000" stroke-opacity="1" stroke-width="1.6"/>
<circle cx="1284.4" cy="381.7" r="4.9" fill="#ffffff" stroke="#000" stroke-opacity="0.8" stroke-width="1.3"/>
<g clip-path="url(#ins)"><use href="#ciefill" transform="translate(-4743.68 -1427.77) scale(4.6390 5.9132)"/></g>
<rect x="1514.2" y="47.1" width="190.8" height="200.6" fill="none" stroke="#8e8e8e" stroke-width="1.1"/>
<rect x="1601.9" y="140.1" width="15" height="15" fill="none" stroke="#ffffff" stroke-opacity="0.85" stroke-width="1.7"/>
<circle cx="1655.8" cy="171.9" r="5.2" fill="#c4b816" stroke="#000" stroke-opacity="0.8" stroke-width="1.3"/>
<rect x="1203" y="661" width="301.5" height="204" fill="#000"/>
<rect x="0" y="888.5" width="1716" height="61.5" fill="url(#g37)"/>
<rect x="0" y="886.5" width="1716" height="2" fill="#2c2c2c"/>
<path d="M-5 950 V893 Q-5 889 -1 889 H38 Q42 889 42 893 V950 Z" fill="url(#g38)"/>
<circle cx="19.3" cy="897.5" r="7.2" fill="url(#g39)"/>
<path d="M15.3 900 L19.3 894.6 L23.3 900 Z" fill="#333"/>
<rect x="2.6" y="915" width="35" height="30.5" fill="#ffff00" rx="3" stroke="#b4b400" stroke-width="1.4"/>
<path d="M48 950 V894 Q48 889 53 889 H193 Q198 889 198 894 V950 Z" fill="url(#g40)"/>
<rect x="53.6" y="894.6" width="139.4" height="36.2" fill="#bfbfa4" rx="3.5" stroke="#92927e" stroke-width="1.6"/>
<text x="123" y="945.3" font-size="10.6" text-anchor="middle" textLength="20.5" lengthAdjust="spacingAndGlyphs" fill="#383838">20%</text>
<path d="M200 950 V894 Q200 889 205 889 H345 Q350 889 350 894 V950 Z" fill="url(#g41)"/>
<rect x="205.6" y="894.6" width="139.4" height="36.2" fill="#c1c189" rx="3.5" stroke="#93936f" stroke-width="1.6"/>
<text x="275" y="945.3" font-size="10.6" text-anchor="middle" textLength="20.5" lengthAdjust="spacingAndGlyphs" fill="#383838">40%</text>
<path d="M352 950 V894 Q352 889 357 889 H497 Q502 889 502 894 V950 Z" fill="url(#g42)"/>
<rect x="357.6" y="894.6" width="139.4" height="36.2" fill="#c2c26e" rx="3.5" stroke="#939360" stroke-width="1.6"/>
<text x="427" y="945.3" font-size="10.6" text-anchor="middle" textLength="20.5" lengthAdjust="spacingAndGlyphs" fill="#383838">60%</text>
<path d="M504 950 V894 Q504 889 509 889 H649 Q654 889 654 894 V950 Z" fill="url(#g43)"/>
<rect x="509.6" y="894.6" width="139.4" height="36.2" fill="#c3c34a" rx="3.5" stroke="#94944d" stroke-width="1.6"/>
<text x="579" y="945.3" font-size="10.6" text-anchor="middle" textLength="20.5" lengthAdjust="spacingAndGlyphs" fill="#383838">80%</text>
<path d="M656 950 V894 Q656 889 661 889 H801 Q806 889 806 894 V950 Z" fill="url(#g44)"/>
<rect x="661.6" y="894.6" width="139.4" height="36.2" fill="#c6be00" rx="3.5" stroke="#959124" stroke-width="1.6"/>
<text x="731" y="945.3" font-size="10.6" text-anchor="middle" textLength="27" lengthAdjust="spacingAndGlyphs" fill="#e0e0e0" font-weight="bold">100%</text>
<path d="M1393 907.4 V893 Q1393 889 1397 889 H1437 Q1441 889 1441 893 V907.4 Z" fill="url(#g45)"/>
<rect x="1393" y="907.4" width="48" height="1.2" fill="#3a3a3a"/>
<rect x="1393" y="908.6" width="48" height="41.4" fill="url(#g46)"/>
<circle cx="1417.5" cy="897.8" r="7.2" fill="url(#g47)"/>
<path d="M1413.6 900.2 L1417.5 895 L1421.4 900.2 Z" fill="#3a3a3a"/>
<rect x="1401" y="912.8" width="32" height="32.6" fill="none" rx="4.5" stroke="#a8a8a8" stroke-width="1"/>
<rect x="1402.8" y="914.6" width="28.4" height="29" fill="url(#g48)" rx="3.5" stroke="#1e1e1e" stroke-width="2.6"/>
<rect x="1410" y="922.1" width="14" height="13.8" fill="url(#g49)"/>
<path d="M1442 919 V893 Q1442 889 1446 889 H1488 V919 Z" fill="url(#g50)"/>
<circle cx="1465" cy="904.2" r="9.8" fill="url(#g51)"/>
<rect x="1489" y="889" width="44" height="30" fill="url(#g52)"/>
<circle cx="1511" cy="904.2" r="9.8" fill="url(#g53)"/>
<rect x="1534" y="889" width="44" height="30" fill="url(#g54)"/>
<circle cx="1556" cy="904.2" r="9.8" fill="url(#g55)"/>
<rect x="1579" y="889" width="44" height="30" fill="url(#g56)"/>
<circle cx="1601" cy="904.2" r="9.8" fill="url(#g57)"/>
<rect x="1624" y="889" width="44" height="30" fill="url(#g58)"/>
<circle cx="1645.6" cy="904.2" r="9.8" fill="url(#g59)"/>
<path d="M1669 919 V889 H1710 Q1714 889 1714 893 V919 Z" fill="url(#g60)"/>
<circle cx="1691.6" cy="904.2" r="9.8" fill="url(#g61)"/>
<rect x="1461" y="900.2" width="8" height="7.8" fill="#2c2c2c"/>
<path d="M1507.8 899.4 L1516.6 904.4 L1507.8 909.4 Z" fill="#2a2a2a"/>
<path d="M1553.4 899.6 H1551.2 V909.2 H1553.4 M1558.6 899.6 H1560.8 V909.2 H1558.6" fill="none" stroke="#2a2a2a" stroke-width="1.9"/>
<rect x="1553.5" y="903.5" width="1.8" height="1.8" fill="#2a2a2a"/>
<rect x="1556.8" y="903.5" width="1.8" height="1.8" fill="#2a2a2a"/>
<path d="M1601 904.2 C1599.4 901.4 1594.6 901 1594.6 904.2 C1594.6 907.4 1599.4 907 1601 904.2 C1602.6 901.4 1607.4 901 1607.4 904.2 C1607.4 907.4 1602.6 907 1601 904.2 Z" fill="none" stroke="#2a2a2a" stroke-width="1.8"/>
<path d="M1641 903.2 A5 5 0 0 1 1650 901.6 M1650.4 905.4 A5 5 0 0 1 1641.4 907" fill="none" stroke="#1e1e1e" stroke-width="2"/>
<path d="M1651.6 899 V903.4 H1647.2 Z M1639.8 909.6 V905.2 H1644.2 Z" fill="#1e1e1e"/>
<rect x="1442" y="919" width="274" height="1.2" fill="#333"/>
<path d="M1442 950 V925 Q1442 920.2 1447 920.2 H1578 V950 Z" fill="url(#g62)"/>
<path d="M1579 950 V920.2 H1710 Q1715 920.2 1715 925 V950 Z" fill="url(#g62)"/>
<rect x="1578" y="920" width="1" height="30" fill="#333"/>
<circle cx="1472.6" cy="935" r="9.6" fill="url(#g63)"/>
<circle cx="1685.6" cy="935" r="9.6" fill="url(#g64)"/>
<path d="M1471.6 930.6 L1467.6 935 L1471.6 939.4 M1476.6 930.6 L1472.6 935 L1476.6 939.4" fill="none" stroke="#2c2c2c" stroke-width="1.5"/>
<path d="M1681.8 930.6 L1685.8 935 L1681.8 939.4 M1686.8 930.6 L1690.8 935 L1686.8 939.4" fill="none" stroke="#2c2c2c" stroke-width="1.5"/>
<text x="1500" y="942.7" font-size="21.6" text-anchor="start" textLength="50" lengthAdjust="spacingAndGlyphs" fill="#2a2a2a" stroke="#2a2a2a" stroke-width="0.5">Back</text>
<text x="1606.4" y="942.7" font-size="21.6" text-anchor="start" textLength="51.5" lengthAdjust="spacingAndGlyphs" fill="#2a2a2a" stroke="#2a2a2a" stroke-width="0.5">Next</text>
</svg>
</body></html>
